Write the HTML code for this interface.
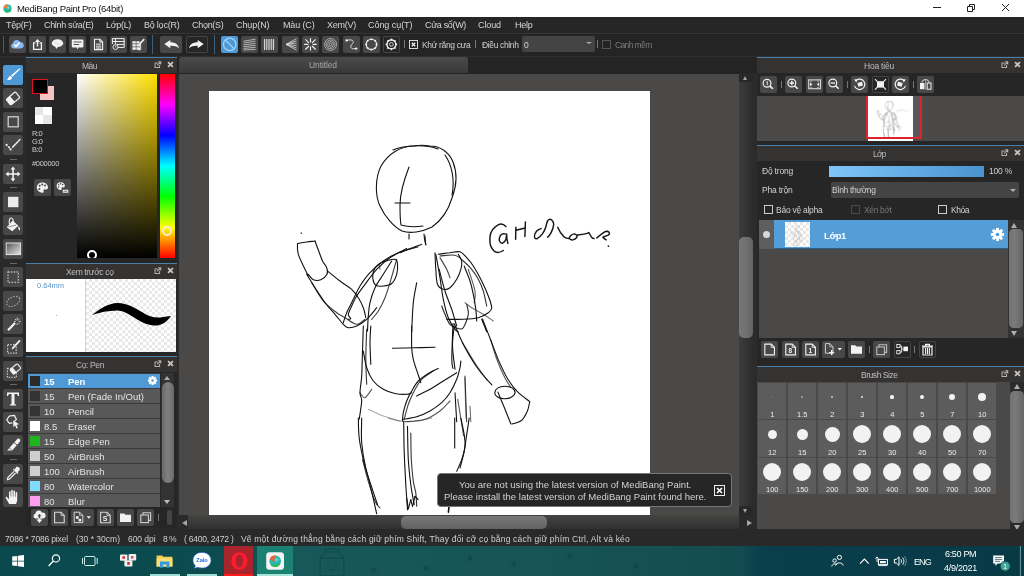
<!DOCTYPE html>
<html>
<head>
<meta charset="utf-8">
<title>MediBang Paint Pro</title>
<style>
html,body{margin:0;padding:0;}
body{width:1024px;height:576px;overflow:hidden;position:relative;background:#2b2b2b;font-family:"Liberation Sans",sans-serif;font-size:10px;color:#d2d2d2;}
.a{position:absolute;}
svg.a{will-change:transform;}
.t{position:absolute;white-space:nowrap;line-height:1;will-change:transform;}
/* title bar */
#title{left:0;top:0;width:1024px;height:17px;background:#fff;}
/* menu */
#menu{left:0;top:17px;width:1024px;height:16px;background:#262626;}
#menu .t{top:4px;font-size:9px;color:#d6d6d6;}
/* toolbar */
#tb{left:0;top:33px;width:1024px;height:24px;background:#242424;border-top:1px solid #343434;border-bottom:1px solid #2e2e2e;box-sizing:border-box;}
.btn{position:absolute;background:#484848;border-radius:2px;box-sizing:border-box;}
.btn.dk{background:#262626;box-shadow:inset 0 0 0 1px #444;}
.btn.sel{background:#4f9ad6;}
.sep{position:absolute;width:1px;background:#555;}
/* panels */
.hdr{position:absolute;height:16px;background:#353232;border-top:1px solid #4880ac;box-sizing:border-box;}
.hdr .t{top:4px;font-size:8.5px;color:#bdbdbd;}
</style>
</head>
<body>

<!-- TITLE BAR -->
<div id="title" class="a">
  <svg class="a" style="left:3px;top:3.8px" width="9" height="9" viewBox="0 0 9 9"><circle cx="4.5" cy="4.5" r="4.1" fill="#27b59f"/><path d="M1.2 6.9A4.1 4.1 0 0 0 8.2 6.4Q4.5 8 1.2 6.9Z" fill="#34b04a"/><path d="M.6 3.4A4.1 4.1 0 0 1 5 .4Q3.6 2.6 4.4 4.6Q2 4.6 .6 3.4Z" fill="#ef7d3a"/><circle cx="5.4" cy="3.6" r="1.5" fill="#5fd6c4"/></svg>
  <div class="t" style="left:17px;top:3.6px;font-size:9.5px;color:#111;letter-spacing:-0.310px">MediBang Paint Pro (64bit)</div>
  <svg class="a" style="left:920px;top:0" width="104" height="17" viewBox="0 0 104 17"><path d="M13 7.5H21" stroke="#222" stroke-width="1"/><path d="M47.5 6.5H52.5V11.5H47.5ZM49.5 6.5V4.5H54.5V9.5H52.5" fill="none" stroke="#222" stroke-width="1"/><path d="M82 4L89 11M89 4L82 11" stroke="#222" stroke-width="1"/></svg>
</div>

<!-- MENU -->
<div id="menu" class="a">
  <div class="t" style="left:6px;letter-spacing:-0.250px">Tệp(F)</div>
  <div class="t" style="left:44px;letter-spacing:-0.337px">Chỉnh sửa(E)</div>
  <div class="t" style="left:106px;letter-spacing:-0.320px">Lớp(L)</div>
  <div class="t" style="left:143.5px;letter-spacing:-0.224px">Bộ lọc(R)</div>
  <div class="t" style="left:191.5px;letter-spacing:-0.288px">Chọn(S)</div>
  <div class="t" style="left:235.5px;letter-spacing:-0.074px">Chụp(N)</div>
  <div class="t" style="left:282.5px;letter-spacing:-0.145px">Màu (C)</div>
  <div class="t" style="left:326.5px;letter-spacing:-0.253px">Xem(V)</div>
  <div class="t" style="left:367.5px;letter-spacing:-0.052px">Công cụ(T)</div>
  <div class="t" style="left:424.5px;letter-spacing:-0.337px">Cửa sổ(W)</div>
  <div class="t" style="left:478px;letter-spacing:-0.103px">Cloud</div>
  <div class="t" style="left:514.5px;letter-spacing:-0.254px">Help</div>
</div>

<!-- TOOLBAR -->
<div id="tb" class="a">
  <div class="sep" style="left:3px;top:2px;height:17px;background:#3a5f7f"></div>
  <div class="btn" style="left:9px;top:2px;width:17px;height:17px" ><svg class="a" style="left:0;top:0" width="17" height="17" viewBox="0 0 17 17"><path d="M4.6 12.6a2.7 2.7 0 0 1-.5-5.3a3.6 3.6 0 0 1 6.9-1.2a3.1 3.1 0 0 1 1.3 6.1q-.4.3-1 .4Z" fill="#86b7ef"/><path d="M5 8.6L6.9 10.6L10.6 6.4" fill="none" stroke="#fff" stroke-width="1.5"/></svg></div>
  <div class="btn" style="left:29px;top:2px;width:17px;height:17px" ><svg class="a" style="left:0;top:0" width="17" height="17" viewBox="0 0 17 17"><path d="M6.4 6.8H4.6V13.3H12.4V6.8H10.6" fill="none" stroke="#f2f2f2" stroke-width="1.3"/><path d="M8.5 10.4V4.6" stroke="#f2f2f2" stroke-width="1.5"/><path d="M5.9 6L8.5 3L11.1 6Z" fill="#f2f2f2"/></svg></div>
  <div class="btn" style="left:49px;top:2px;width:17px;height:17px" ><svg class="a" style="left:0;top:0" width="17" height="17" viewBox="0 0 17 17"><ellipse cx="8.5" cy="7.2" rx="5.7" ry="3.9" fill="#f2f2f2"/><path d="M6 9.8L7.2 13L9.4 10.3Z" fill="#f2f2f2"/><path d="M6 6.5h1.5M8 7.8h2" stroke="#bbb" stroke-width=".6"/></svg></div>
  <div class="btn" style="left:69px;top:2px;width:17px;height:17px" ><svg class="a" style="left:0;top:0" width="17" height="17" viewBox="0 0 17 17"><rect x="2.8" y="3.4" width="11.6" height="8" rx="1" fill="#f2f2f2"/><path d="M7.4 11.2L8.6 13.2L9.8 11.2Z" fill="#f2f2f2"/><path d="M4.6 6h8M4.6 8.5h5.5" stroke="#555" stroke-width="1.1"/></svg></div>
  <div class="btn" style="left:90px;top:2px;width:17px;height:17px" ><svg class="a" style="left:0;top:0" width="17" height="17" viewBox="0 0 17 17"><path d="M4.5 3.3H10L12.6 5.9V13.6H4.5Z" fill="none" stroke="#f2f2f2" stroke-width="1.1"/><path d="M9.8 3.3V6.1H12.6" fill="none" stroke="#f2f2f2" stroke-width="1"/><path d="M6 8.2h5.2M6 10.2h5.2M6 12h5.2" stroke="#f2f2f2" stroke-width="1"/></svg></div>
  <div class="btn" style="left:110px;top:2px;width:17px;height:17px" ><svg class="a" style="left:0;top:0" width="17" height="17" viewBox="0 0 17 17"><path d="M2.4 2.6H14.2V11.4H7.5M2.4 2.6V8M2.4 5.5H14.2M7 8.4H14.2M5.4 2.6V8" fill="none" stroke="#f2f2f2" stroke-width="1"/><circle cx="5.5" cy="11" r="2.5" fill="#444" stroke="#f2f2f2" stroke-width=".9"/><path d="M5.5 9.6V11H6.6" fill="none" stroke="#f2f2f2" stroke-width=".7"/></svg></div>
  <div class="btn" style="left:130px;top:2px;width:17px;height:17px" ><svg class="a" style="left:0;top:0" width="17" height="17" viewBox="0 0 17 17"><path d="M2.4 5.2h3.4v2.4H2.4zM6.4 5.2h3.2v2.4H6.4zM2.4 8.2h3.4v2.4H2.4zM6.4 8.2h3.6v2.4H6.4zM2.4 11.2h3.4v2.6H2.4zM6.4 11.2h3.6v2.6H6.4z" fill="#f2f2f2"/><path d="M10.6 6.2V13.8H8" stroke="#f2f2f2" stroke-width=".9" fill="none"/><path d="M13.6 2.6L14.8 3.8L10.2 8.6L8.8 9L9.2 7.6Z" fill="#f2f2f2"/></svg></div>
  <div class="sep" style="left:152px;top:1px;height:19px;background:#3a5f7f"></div>
  <div class="btn" style="left:160px;top:2px;width:22px;height:17px" ><svg class="a" style="left:0;top:0" width="22" height="17" viewBox="0 0 22 17"><path d="M4.4 8L10.3 3.9V6.3C15 6.3 18.2 8.4 19 12.2C16.6 10.2 13.6 9.6 10.3 9.8V12.2Z" fill="#f2f2f2"/></svg></div>
  <div class="btn dk" style="left:186px;top:2px;width:22px;height:17px" ><svg class="a" style="left:0;top:0" width="22" height="17" viewBox="0 0 22 17"><path d="M17.6 8L11.7 3.9V6.3C7 6.3 3.8 8.4 3 12.2C5.4 10.2 8.4 9.6 11.7 9.8V12.2Z" fill="#f2f2f2"/></svg></div>
  <div class="sep" style="left:214px;top:1px;height:19px;background:#3a5f7f"></div>
  <div class="btn sel" style="left:221px;top:2px;width:17px;height:17px" ><svg class="a" style="left:0;top:0" width="17" height="17" viewBox="0 0 17 17"><circle cx="8.7" cy="8.4" r="6.2" fill="none" stroke="#a6d6fb" stroke-width="1.2"/><path d="M4.4 4.2L13 12.6" stroke="#a6d6fb" stroke-width="1.2"/></svg></div>
  <div class="btn" style="left:241px;top:2px;width:17px;height:17px" ><svg class="a" style="left:0;top:0" width="17" height="17" viewBox="0 0 17 17"><path d="M2.5 5.2L14.6 3.2M2.5 7L14.6 5.2M2.5 8.8L14.6 7.4M2.5 10.6L14.6 9.4M2.5 12.4L14.6 11.4M2.5 14L14.6 13.4" stroke="#cfcfcf" stroke-width=".8"/></svg></div>
  <div class="btn" style="left:261px;top:2px;width:17px;height:17px" ><svg class="a" style="left:0;top:0" width="17" height="17" viewBox="0 0 17 17"><path d="M3.6 3V14M5.8 3V14M8 3V14M10.2 3V14M12.4 3V14" stroke="#eee" stroke-width="1"/><path d="M2.6 5H14M2.6 7.2H14M2.6 9.4H14M2.6 11.6H14" stroke="#aaa" stroke-width=".5"/></svg></div>
  <div class="btn" style="left:282px;top:2px;width:17px;height:17px" ><svg class="a" style="left:0;top:0" width="17" height="17" viewBox="0 0 17 17"><path d="M4 8.4L14.6 2.6M4 8.4L14.6 4.8M4 8.4L14.6 7M4 8.4L14.6 9.6M4 8.4L14.6 12M4 8.4L14.6 14.2" stroke="#ddd" stroke-width=".8"/></svg></div>
  <div class="btn" style="left:302px;top:2px;width:17px;height:17px" ><svg class="a" style="left:0;top:0" width="17" height="17" viewBox="0 0 17 17"><path d="M8.5 2.2V6.4M8.5 10.4V14.6M2.2 8.4H6.4M10.6 8.4H14.8M3.4 3.3L6.9 6.8M10.1 10L13.6 13.5M13.6 3.3L10.1 6.8M6.9 10L3.4 13.5" stroke="#f2f2f2" stroke-width="1.15"/></svg></div>
  <div class="btn" style="left:322px;top:2px;width:17px;height:17px" ><svg class="a" style="left:0;top:0" width="17" height="17" viewBox="0 0 17 17"><g fill="none" stroke="#cfcfcf" stroke-width=".7"><circle cx="8.6" cy="8.4" r="6"/><circle cx="8.6" cy="8.4" r="4.4"/><circle cx="8.6" cy="8.4" r="2.9"/><circle cx="8.6" cy="8.4" r="1.3"/></g></svg></div>
  <div class="btn" style="left:343px;top:2px;width:17px;height:17px" ><svg class="a" style="left:0;top:0" width="17" height="17" viewBox="0 0 17 17"><path d="M3.6 4.4C9 2.8 12 5 9.4 7.8C6.6 10.6 7 13.6 13.2 12.6" fill="none" stroke="#ddd" stroke-width="1"/><circle cx="3.6" cy="4.4" r="1.2" fill="#f2f2f2"/><circle cx="13.2" cy="12.6" r="1.2" fill="#f2f2f2"/></svg></div>
  <div class="btn" style="left:363px;top:2px;width:17px;height:17px" ><svg class="a" style="left:0;top:0" width="17" height="17" viewBox="0 0 17 17"><circle cx="8.4" cy="8.4" r="5.2" fill="none" stroke="#f2f2f2" stroke-width="1.1"/><g fill="#f2f2f2"><circle cx="8.4" cy="3.2" r="1"/><circle cx="8.4" cy="13.6" r="1"/><circle cx="3.2" cy="8.4" r="1"/><circle cx="13.6" cy="8.4" r="1"/><circle cx="4.7" cy="4.7" r=".9"/><circle cx="12.1" cy="4.7" r=".9"/><circle cx="4.7" cy="12.1" r=".9"/><circle cx="12.1" cy="12.1" r=".9"/></g></svg></div>
  <div class="btn dk" style="left:383px;top:2px;width:17px;height:17px" ><svg class="a" style="left:0;top:0" width="17" height="17" viewBox="0 0 17 17"><g transform="translate(8.4 8.4)"><circle r="4.4" fill="none" stroke="#e8e8e8" stroke-width="1.41"/><circle r="1.85" fill="none" stroke="#e8e8e8" stroke-width="0.88"/><rect x="-0.88" y="-5.81" width="1.76" height="1.85" fill="#e8e8e8" transform="rotate(0)"/><rect x="-0.88" y="-5.81" width="1.76" height="1.85" fill="#e8e8e8" transform="rotate(45)"/><rect x="-0.88" y="-5.81" width="1.76" height="1.85" fill="#e8e8e8" transform="rotate(90)"/><rect x="-0.88" y="-5.81" width="1.76" height="1.85" fill="#e8e8e8" transform="rotate(135)"/><rect x="-0.88" y="-5.81" width="1.76" height="1.85" fill="#e8e8e8" transform="rotate(180)"/><rect x="-0.88" y="-5.81" width="1.76" height="1.85" fill="#e8e8e8" transform="rotate(225)"/><rect x="-0.88" y="-5.81" width="1.76" height="1.85" fill="#e8e8e8" transform="rotate(270)"/><rect x="-0.88" y="-5.81" width="1.76" height="1.85" fill="#e8e8e8" transform="rotate(315)"/></g></svg></div>
  <div class="sep" style="left:404px;top:6px;height:8px;background:#777"></div>
  <div class="a" style="left:409px;top:6px;width:9px;height:9px;border:1px solid #d8d8d8;box-sizing:border-box;"></div><svg class="a" style="left:409px;top:6px" width="9" height="9" viewBox="0 0 9 9"><path d="M2.8 2.8L6.2 6.2M6.2 2.8L2.8 6.2" stroke="#eee" stroke-width="1.3"/></svg>
  <div class="t" style="left:421.8px;top:6.7px;font-size:8.5px;color:#d0d0d0;letter-spacing:-0.350px" id="tAA">Khử răng cưa</div>
  <div class="sep" style="left:475px;top:6px;height:8px;background:#777"></div>
  <div class="t" style="left:481.8px;top:6.7px;font-size:8.5px;color:#d0d0d0;letter-spacing:-0.367px" id="tDC">Điều chỉnh</div>
  <div class="a" style="left:522px;top:2px;width:73px;height:16px;background:#444;border-radius:2px"></div>
  <div class="t" style="left:524.4px;top:6.7px;font-size:8.5px;color:#d0d0d0">0</div>
  <div class="a" style="left:586px;top:8px;width:0;height:0;border-left:3px solid transparent;border-right:3px solid transparent;border-top:2px solid #aaa"></div>
  <div class="sep" style="left:597px;top:6px;height:8px;background:#777"></div>
  <div class="a" style="left:602px;top:6px;width:9px;height:9px;border:1px solid #555;box-sizing:border-box;"></div>
  <div class="t" style="left:615.3px;top:6.7px;font-size:8.5px;color:#7c7c7c;letter-spacing:-0.622px" id="tCM">Canh mềm</div>
</div>

<!-- LEFT TOOLBOX -->
<div id="toolbox" class="a" style="left:0;top:57px;width:26px;height:471px;background:#292929;">
  <div class="btn sel" style="left:3px;top:8px;width:20px;height:20px" ><svg class="a" style="left:0;top:0" width="20" height="20" viewBox="0 0 20 20"><path d="M16.6 3.2L17.4 4L9.4 11.8L8 10.6Z" fill="#fff"/><path d="M7.6 11L9 12.4C8.6 14.8 6 15.6 3.6 14.6C5.4 14.2 5 11.6 7.6 11Z" fill="#fff"/></svg></div>
  <div class="btn" style="left:3px;top:31px;width:20px;height:20px" ><svg class="a" style="left:0;top:0" width="20" height="20" viewBox="0 0 20 20"><g transform="rotate(-40 10 10.4)"><rect x="4" y="6.8" width="12" height="7.4" rx="1.2" fill="none" stroke="#f2f2f2" stroke-width="1.2"/><path d="M4 8A1.2 1.2 0 0 1 5.2 6.8H9.2V14.2H5.2A1.2 1.2 0 0 1 4 13Z" fill="#f2f2f2"/></g></svg></div>
  <div class="btn" style="left:3px;top:55px;width:20px;height:20px" ><svg class="a" style="left:0;top:0" width="20" height="20" viewBox="0 0 20 20"><rect x="5.2" y="4.8" width="10" height="10" fill="none" stroke="#cfcfcf" stroke-width="1.3"/></svg></div>
  <div class="btn" style="left:3px;top:78px;width:20px;height:20px" ><svg class="a" style="left:0;top:0" width="20" height="20" viewBox="0 0 20 20"><path d="M17 3.6L17.8 4.6L10.4 12.6L8.8 13.2L9.2 11.6Z" fill="#f2f2f2"/><circle cx="3.6" cy="9.8" r="1.1" fill="#f2f2f2"/><circle cx="6" cy="12.2" r="1" fill="#f2f2f2"/><circle cx="7.6" cy="14.4" r="1.1" fill="#f2f2f2"/><path d="M3.6 9.8L7.6 14.4" stroke="#ddd" stroke-width=".6"/></svg></div>
  <div class="btn" style="left:3px;top:107px;width:20px;height:20px" ><svg class="a" style="left:0;top:0" width="20" height="20" viewBox="0 0 20 20"><path d="M10 2.6L12.4 5.6H10.8V9.2H14.4V7.6L17.4 10L14.4 12.4V10.8H10.8V14.4H12.4L10 17.4L7.6 14.4H9.2V10.8H5.6V12.4L2.6 10L5.6 7.6V9.2H9.2V5.6H7.6Z" fill="#f2f2f2"/></svg></div>
  <div class="btn" style="left:3px;top:135px;width:20px;height:20px" ><svg class="a" style="left:0;top:0" width="20" height="20" viewBox="0 0 20 20"><rect x="5" y="4.8" width="10.4" height="10.4" fill="#ececec"/></svg></div>
  <div class="btn" style="left:3px;top:158px;width:20px;height:20px" ><svg class="a" style="left:0;top:0" width="20" height="20" viewBox="0 0 20 20"><path d="M9.6 5.4L15.4 10.8L9.2 16.2L3.8 12.2Z" fill="#f2f2f2"/><path d="M6.6 9.6C5.6 6 6.6 3 8.2 3C9.8 3 10.6 5.6 10.4 8" fill="none" stroke="#f2f2f2" stroke-width="1.1"/><path d="M15.4 11C17 12.4 17.4 14.4 16.8 15.6C15.4 15.2 15 13.2 15.4 11Z" fill="#f2f2f2"/><path d="M5.4 11.8L13.2 10.2" stroke="#666" stroke-width=".7"/></svg></div>
  <div class="btn" style="left:3px;top:182px;width:20px;height:20px" ><svg class="a" style="left:0;top:0" width="20" height="20" viewBox="0 0 20 20"><defs><linearGradient id="gt7" x1="0" y1="0" x2="1" y2="1"><stop offset="0" stop-color="#555"/><stop offset="1" stop-color="#e8e8e8"/></linearGradient></defs><rect x="4.6" y="4" width="15.2" height="11.6" fill="url(#gt7)" stroke="#e6e6e6" stroke-width="1" transform="translate(-1.2 0) scale(.95 1)"/></svg></div>
  <div class="btn" style="left:3px;top:210px;width:20px;height:20px" ><svg class="a" style="left:0;top:0" width="20" height="20" viewBox="0 0 20 20"><rect x="5" y="5" width="10.4" height="10.4" fill="none" stroke="#bcbcbc" stroke-width="1.3" stroke-dasharray="1.5 1.4"/></svg></div>
  <div class="btn" style="left:3px;top:234px;width:20px;height:20px" ><svg class="a" style="left:0;top:0" width="20" height="20" viewBox="0 0 20 20"><ellipse cx="10.2" cy="10.4" rx="7" ry="4.4" transform="rotate(-28 10.2 10.4)" fill="none" stroke="#a4a4a4" stroke-width="1.2" stroke-dasharray="1.5 1.4"/></svg></div>
  <div class="btn" style="left:3px;top:257px;width:20px;height:20px" ><svg class="a" style="left:0;top:0" width="20" height="20" viewBox="0 0 20 20"><path d="M4.2 15.4L5.8 17L12.8 9.8L11.2 8.2Z" fill="#f2f2f2"/><path d="M14.2 3.6V6.4M14.2 9.4V11M11 7.4H12.8M15.8 7.4H17.6M12 5L13.2 6.2M16.4 5L15.2 6.2M16.4 9.8L15.4 8.8" stroke="#e0e0e0" stroke-width=".9"/></svg></div>
  <div class="btn" style="left:3px;top:280px;width:20px;height:20px" ><svg class="a" style="left:0;top:0" width="20" height="20" viewBox="0 0 20 20"><rect x="4.6" y="7.6" width="8.6" height="8.6" fill="none" stroke="#d0d0d0" stroke-width="1.2" stroke-dasharray="1.4 1.3"/><path d="M16.4 2.8L17.6 4L10.4 11.8L8.6 12.4L9.2 10.6Z" fill="#f2f2f2"/></svg></div>
  <div class="btn" style="left:3px;top:304px;width:20px;height:20px" ><svg class="a" style="left:0;top:0" width="20" height="20" viewBox="0 0 20 20"><rect x="4.4" y="7.4" width="9" height="9" fill="none" stroke="#c4c4c4" stroke-width="1.2" stroke-dasharray="1.4 1.3"/><g transform="rotate(-40 12.4 8)"><rect x="7.6" y="5" width="9.6" height="6" rx="1" fill="#484848" stroke="#f2f2f2" stroke-width="1.1"/><rect x="7.6" y="5" width="3.6" height="6" fill="#f2f2f2"/></g></svg></div>
  <div class="btn" style="left:3px;top:332px;width:20px;height:20px" ><svg class="a" style="left:0;top:0" width="20" height="20" viewBox="0 0 20 20"><path d="M4 3.6H16V7H14.9C14.7 5.6 14.2 5 12.8 5H11.5V14.2C11.5 15.2 11.9 15.5 13.2 15.5V16.6H6.8V15.5C8.1 15.5 8.5 15.2 8.5 14.2V5H7.2C5.8 5 5.3 5.6 5.1 7H4Z" fill="#f2f2f2"/></svg></div>
  <div class="btn" style="left:3px;top:355px;width:20px;height:20px" ><svg class="a" style="left:0;top:0" width="20" height="20" viewBox="0 0 20 20"><path d="M6 4.2L11.4 3.4L13.4 7.4L11 9.6" fill="none" stroke="#f2f2f2" stroke-width="1.2"/><path d="M6 4.2L3.8 8L6.4 11.4L9.4 10.8" fill="none" stroke="#f2f2f2" stroke-width="1.2"/><path d="M10.2 8.6L16.2 12.2L13.6 12.8L14.8 16L13.4 16.6L12.2 13.6L10.4 15.2Z" fill="#f2f2f2"/></svg></div>
  <div class="btn" style="left:3px;top:378px;width:20px;height:20px" ><svg class="a" style="left:0;top:0" width="20" height="20" viewBox="0 0 20 20"><path d="M4.2 15.6H9.2L17 6.4C17.8 5.2 17 3.6 15.4 3.6C14.8 3.6 14.2 3.9 13.8 4.4Z" fill="#f2f2f2"/><path d="M11 7.6L14.2 10" stroke="#484848" stroke-width=".9"/><path d="M6.4 13.2L8.6 14.8" stroke="#484848" stroke-width=".7"/></svg></div>
  <div class="btn" style="left:3px;top:407px;width:20px;height:20px" ><svg class="a" style="left:0;top:0" width="20" height="20" viewBox="0 0 20 20"><path d="M13 3.2C14.6 2.2 16.8 3.4 16.8 5.2C16.8 6 16.4 6.6 15.8 7L14.6 8.2L15.4 9L14.4 10L10 5.6L11 4.6L11.8 5.4Z" fill="#f2f2f2"/><path d="M11 7.4L5 13.4L4.4 15.6L6.6 15L12.6 9" fill="none" stroke="#f2f2f2" stroke-width="1.2"/></svg></div>
  <div class="btn" style="left:3px;top:430px;width:20px;height:20px" ><svg class="a" style="left:0;top:0" width="20" height="20" viewBox="0 0 20 20"><path d="M6.2 17C4.8 14.6 3.4 12.6 2.6 10.6C2.4 9.8 3.4 9.4 4 10L6 12.4V5C6 4 7.6 4 7.6 5V9.6H8.2V3.6C8.2 2.6 9.8 2.6 9.8 3.6V9.4H10.4V4.2C10.4 3.2 12 3.2 12 4.2V9.8H12.6V5.8C12.6 4.8 14.2 4.8 14.2 5.8V12.6C14.2 14.4 13.6 15.8 13 17Z" fill="#f2f2f2"/></svg></div>
  <div class="a" style="left:10px;top:102px;width:7px;height:1px;background:#666"></div>
  <div class="a" style="left:10px;top:130px;width:7px;height:1px;background:#666"></div>
  <div class="a" style="left:10px;top:206px;width:7px;height:1px;background:#666"></div>
  <div class="a" style="left:10px;top:327px;width:7px;height:1px;background:#666"></div>
  <div class="a" style="left:10px;top:402px;width:7px;height:1px;background:#666"></div>
</div>

<!-- COLOR PANEL -->
<div id="colorp" class="a" style="left:26px;top:57px;width:150.5px;height:206px;background:#262626;">
  <div class="hdr" style="left:0;top:0;width:151px;"><svg class="a" style="left:128.2px;top:2.6px" width="7.6" height="7.6" viewBox="0 0 9 9"><path d="M4.6 2.4H1.2V7.8H6.6V4.6" fill="none" stroke="#b4b0aa" stroke-width="1.2"/><path d="M3.8 5.2L7.6 1.4M5 1H8V4" fill="none" stroke="#b4b0aa" stroke-width="1.2"/></svg><svg class="a" style="left:140.6px;top:3.2px" width="7" height="7" viewBox="0 0 8 8"><path d="M1.2 1.2L6.8 6.8M6.8 1.2L1.2 6.8" stroke="#c8c4bc" stroke-width="2.1"/></svg><div class="t" style="left:56px;letter-spacing:-0.516px">Màu</div></div>
  <div class="a" style="left:14px;top:29px;width:14px;height:14px;background:#f2c4c4;"></div>
  <div class="a" style="left:6px;top:22px;width:16px;height:15px;background:#000;border:1px solid #e0131a;box-sizing:border-box;"></div>
  <div class="a" id="trsw" style="left:8.5px;top:49.5px;width:17.6px;height:17.6px;background:#fff;"><div class="a" style="left:0;top:0;width:8.8px;height:8.8px;background:#e6e6e6"></div><div class="a" style="left:8.8px;top:8.8px;width:8.8px;height:8.8px;background:#e6e6e6"></div></div>
  <div class="t" style="left:6px;top:73px;font-size:7.5px;color:#ccc;letter-spacing:-0.557px">R:0</div>
  <div class="t" style="left:6px;top:81px;font-size:7.5px;color:#ccc;letter-spacing:-0.531px">G:0</div>
  <div class="t" style="left:6px;top:89px;font-size:7.5px;color:#ccc;letter-spacing:-0.422px">B:0</div>
  <div class="t" style="left:6px;top:103px;font-size:7.5px;color:#ccc;letter-spacing:-0.315px">#000000</div>
  <div class="btn" style="left:8px;top:122px;width:17px;height:17px" ><svg class="a" style="left:0;top:0" width="17" height="17" viewBox="0 0 17 17"><path d="M8.4 3.3999999999999995C11.8 3.3999999999999995 14.0 5.6 14.0 8.6C14.0 10.2 12.600000000000001 10.8 11.4 10.4C10.0 10.0 9.200000000000001 11.0 9.6 12.2C10.0 13.399999999999999 9.0 14.0 7.800000000000001 13.8C4.800000000000001 13.399999999999999 2.8000000000000007 11.2 2.8000000000000007 8.6C2.8000000000000007 5.6 5.0 3.3999999999999995 8.4 3.3999999999999995Z" fill="#f2f2f2"/><circle cx="5.6000000000000005" cy="6.8" r="1" fill="#444"/><circle cx="8.200000000000001" cy="5.3999999999999995" r="1" fill="#444"/><circle cx="11.0" cy="6.6" r="1" fill="#444"/><circle cx="5.4" cy="10.0" r="1" fill="#444"/></svg></div>
  <div class="btn" style="left:28px;top:122px;width:17px;height:17px" ><svg class="a" style="left:0;top:0" width="17" height="17" viewBox="0 0 17 17"><g transform="translate(.5 .7) scale(.74)"><path d="M8.4 3.3999999999999995C11.8 3.3999999999999995 14.0 5.6 14.0 8.6C14.0 10.2 12.600000000000001 10.8 11.4 10.4C10.0 10.0 9.200000000000001 11.0 9.6 12.2C10.0 13.399999999999999 9.0 14.0 7.800000000000001 13.8C4.800000000000001 13.399999999999999 2.8000000000000007 11.2 2.8000000000000007 8.6C2.8000000000000007 5.6 5.0 3.3999999999999995 8.4 3.3999999999999995Z" fill="#f2f2f2"/><circle cx="5.6000000000000005" cy="6.8" r="1" fill="#444"/><circle cx="8.200000000000001" cy="5.3999999999999995" r="1" fill="#444"/><circle cx="11.0" cy="6.6" r="1" fill="#444"/><circle cx="5.4" cy="10.0" r="1" fill="#444"/></g><rect x="8.6" y="10.6" width="6" height="3.4" rx=".6" fill="#f2f2f2" stroke="#444" stroke-width=".5"/><path d="M9.8 12.3h3.6" stroke="#666" stroke-width=".8"/></svg></div>
  <div class="a" style="left:51px;top:17px;width:80px;height:184px;background:linear-gradient(to bottom,rgba(0,0,0,0),#000),linear-gradient(to right,#fff,#ffdf00);"></div>
  <div class="a" style="left:134px;top:17px;width:15px;height:184px;background:linear-gradient(to bottom,#ff0000 0%,#ff00ff 16.7%,#0000ff 33.3%,#00ffff 50%,#00ff00 66.7%,#ffff00 83.3%,#ff0000 100%);"></div>
  <div class="a" style="left:136px;top:169px;width:10px;height:10px;border-radius:50%;border:2px solid #f3eed8;box-sizing:border-box;"></div>
  <div class="a" style="left:61px;top:192px;width:10px;height:9px;overflow:hidden"><div class="a" style="left:0;top:1px;width:10px;height:10px;border-radius:50%;border:2.2px solid #fff;box-sizing:border-box;"></div></div>
</div>

<!-- BRUSH PREVIEW PANEL -->
<div id="prevp" class="a" style="left:26px;top:263px;width:150.5px;height:93px;background:#262626;">
  <div class="hdr" style="left:0;top:0;width:151px;"><svg class="a" style="left:128.2px;top:2.6px" width="7.6" height="7.6" viewBox="0 0 9 9"><path d="M4.6 2.4H1.2V7.8H6.6V4.6" fill="none" stroke="#b4b0aa" stroke-width="1.2"/><path d="M3.8 5.2L7.6 1.4M5 1H8V4" fill="none" stroke="#b4b0aa" stroke-width="1.2"/></svg><svg class="a" style="left:140.6px;top:3.2px" width="7" height="7" viewBox="0 0 8 8"><path d="M1.2 1.2L6.8 6.8M6.8 1.2L1.2 6.8" stroke="#c8c4bc" stroke-width="2.1"/></svg><div class="t" style="left:40px;letter-spacing:-0.366px">Xem trước cọ</div></div>
  <div class="a" style="left:.3px;top:15.8px;width:59px;height:73.2px;background:#fff;"></div>
  <div class="a" style="left:59.2px;top:15.8px;width:.8px;height:73.2px;background:#d0d0d0;"></div>
  <div class="a" style="left:60px;top:15.8px;width:90.3px;height:73.2px;background-color:#fff;background-image:linear-gradient(45deg,#e9e9e9 25%,transparent 25%,transparent 75%,#e9e9e9 75%),linear-gradient(45deg,#e9e9e9 25%,transparent 25%,transparent 75%,#e9e9e9 75%);background-size:6px 6px;background-position:0 0,3px 3px;"></div>
  <div class="t" style="left:11px;top:19px;font-size:7.5px;color:#5b94c8">0.64mm</div>
  <div class="a" style="left:30px;top:52px;width:1px;height:1px;background:#aab"></div>
  <svg class="a" style="left:60px;top:17px" width="90" height="72" viewBox="0 0 90 72"><path d="M6 35C14 28.5 22 23.3 31.5 22.9C42 22.9 50 28.5 56 32C62 36 68 38 74 37.5C79 37 83 36 85 36C82 41 76 45.6 69 45.6C60 45.2 53 41 47 36.8C42 33.4 37 30.6 31 30.4C22 30.5 14 32.4 6 35Z" fill="#000"/></svg>
</div>

<!-- BRUSH LIST PANEL -->
<div id="brushp" class="a" style="left:26px;top:356px;width:150.5px;height:172px;background:#262626;">
  <div class="hdr" style="left:0;top:0;width:151px;"><svg class="a" style="left:128.2px;top:2.6px" width="7.6" height="7.6" viewBox="0 0 9 9"><path d="M4.6 2.4H1.2V7.8H6.6V4.6" fill="none" stroke="#b4b0aa" stroke-width="1.2"/><path d="M3.8 5.2L7.6 1.4M5 1H8V4" fill="none" stroke="#b4b0aa" stroke-width="1.2"/></svg><svg class="a" style="left:140.6px;top:3.2px" width="7" height="7" viewBox="0 0 8 8"><path d="M1.2 1.2L6.8 6.8M6.8 1.2L1.2 6.8" stroke="#c8c4bc" stroke-width="2.1"/></svg><div class="t" style="left:49.8px;letter-spacing:-0.388px">Cọ: Pen</div></div>
  <div class="a" style="left:2px;top:17px;width:132px;height:134px;overflow:hidden;background:#3a3a3a">
    <div class="a" style="left:0;top:1px;width:132px;height:14px;background:#4f9ad6"><div class="a" style="left:2px;top:2px;width:10px;height:10px;background:#2b2b2b"></div><div class="t" style="left:16px;top:2.5px;font-size:9.5px;font-weight:bold;color:#fff">15</div><div class="t" style="left:40px;top:2.5px;font-size:9.5px;font-weight:bold;color:#fff">Pen</div><div class="a" style="left:117px;top:-1px;width:15px;height:15px" ><svg class="a" style="left:0;top:0" width="15" height="15" viewBox="0 0 15 15"><g transform="translate(7.5 7.5)"><circle r="3.31" fill="#fff"/><rect x="-1.01" y="-4.60" width="2.02" height="2.30" fill="#fff" transform="rotate(0)"/><rect x="-1.01" y="-4.60" width="2.02" height="2.30" fill="#fff" transform="rotate(45)"/><rect x="-1.01" y="-4.60" width="2.02" height="2.30" fill="#fff" transform="rotate(90)"/><rect x="-1.01" y="-4.60" width="2.02" height="2.30" fill="#fff" transform="rotate(135)"/><rect x="-1.01" y="-4.60" width="2.02" height="2.30" fill="#fff" transform="rotate(180)"/><rect x="-1.01" y="-4.60" width="2.02" height="2.30" fill="#fff" transform="rotate(225)"/><rect x="-1.01" y="-4.60" width="2.02" height="2.30" fill="#fff" transform="rotate(270)"/><rect x="-1.01" y="-4.60" width="2.02" height="2.30" fill="#fff" transform="rotate(315)"/><circle r="1.24" fill="#4f9ad6"/></g></svg></div></div>
    <div class="a" style="left:0;top:16px;width:132px;height:14px;background:#585858"><div class="a" style="left:2px;top:2px;width:10px;height:10px;background:#333"></div><div class="t" style="left:16px;top:2.5px;font-size:9.5px;font-weight:normal;color:#e4e4e4">15</div><div class="t" style="left:40px;top:2.5px;font-size:9.5px;font-weight:normal;color:#e4e4e4">Pen (Fade In/Out)</div></div>
    <div class="a" style="left:0;top:31px;width:132px;height:14px;background:#585858"><div class="a" style="left:2px;top:2px;width:10px;height:10px;background:#333"></div><div class="t" style="left:16px;top:2.5px;font-size:9.5px;font-weight:normal;color:#e4e4e4">10</div><div class="t" style="left:40px;top:2.5px;font-size:9.5px;font-weight:normal;color:#e4e4e4">Pencil</div></div>
    <div class="a" style="left:0;top:46px;width:132px;height:14px;background:#585858"><div class="a" style="left:2px;top:2px;width:10px;height:10px;background:#fff"></div><div class="t" style="left:16px;top:2.5px;font-size:9.5px;font-weight:normal;color:#e4e4e4">8.5</div><div class="t" style="left:40px;top:2.5px;font-size:9.5px;font-weight:normal;color:#e4e4e4">Eraser</div></div>
    <div class="a" style="left:0;top:61px;width:132px;height:14px;background:#585858"><div class="a" style="left:2px;top:2px;width:10px;height:10px;background:#1fb51f"></div><div class="t" style="left:16px;top:2.5px;font-size:9.5px;font-weight:normal;color:#e4e4e4">15</div><div class="t" style="left:40px;top:2.5px;font-size:9.5px;font-weight:normal;color:#e4e4e4">Edge Pen</div></div>
    <div class="a" style="left:0;top:76px;width:132px;height:14px;background:#585858"><div class="a" style="left:2px;top:2px;width:10px;height:10px;background:#cfcfcf"></div><div class="t" style="left:16px;top:2.5px;font-size:9.5px;font-weight:normal;color:#e4e4e4">50</div><div class="t" style="left:40px;top:2.5px;font-size:9.5px;font-weight:normal;color:#e4e4e4">AirBrush</div></div>
    <div class="a" style="left:0;top:91px;width:132px;height:14px;background:#585858"><div class="a" style="left:2px;top:2px;width:10px;height:10px;background:#cfcfcf"></div><div class="t" style="left:16px;top:2.5px;font-size:9.5px;font-weight:normal;color:#e4e4e4">100</div><div class="t" style="left:40px;top:2.5px;font-size:9.5px;font-weight:normal;color:#e4e4e4">AirBrush</div></div>
    <div class="a" style="left:0;top:106px;width:132px;height:14px;background:#585858"><div class="a" style="left:2px;top:2px;width:10px;height:10px;background:#7fdcff"></div><div class="t" style="left:16px;top:2.5px;font-size:9.5px;font-weight:normal;color:#e4e4e4">80</div><div class="t" style="left:40px;top:2.5px;font-size:9.5px;font-weight:normal;color:#e4e4e4">Watercolor</div></div>
    <div class="a" style="left:0;top:121px;width:132px;height:14px;background:#585858"><div class="a" style="left:2px;top:2px;width:10px;height:10px;background:#ff9df0"></div><div class="t" style="left:16px;top:2.5px;font-size:9.5px;font-weight:normal;color:#e4e4e4">80</div><div class="t" style="left:40px;top:2.5px;font-size:9.5px;font-weight:normal;color:#e4e4e4">Blur</div></div>
  </div>
  <div class="a" style="left:135px;top:17px;width:13px;height:134px;background:#333;"></div>
  <div class="a" style="left:135.5px;top:26px;width:12px;height:101px;border-radius:6px;background:linear-gradient(to right,#6a6a6a,#808080,#6a6a6a);"></div>
  <div class="a" style="left:138px;top:20px;width:0;height:0;border-left:3px solid transparent;border-right:3px solid transparent;border-bottom:4px solid #aaa"></div>
  <div class="a" style="left:138px;top:144px;width:0;height:0;border-left:3px solid transparent;border-right:3px solid transparent;border-top:4px solid #bbb"></div>
  <div class="btn" style="left:5.3px;top:153.4px;width:17px;height:17px" ><svg class="a" style="left:0;top:0" width="17" height="17" viewBox="0 0 17 17"><path d="M4.6 9.6a2.5 2.5 0 0 1-.3-4.9a3.5 3.5 0 0 1 6.7-1a2.9 2.9 0 0 1 1.4 5.7Z" fill="#f2f2f2"/><path d="M8.4 7V12" stroke="#f2f2f2" stroke-width="2"/><path d="M5.4 10.6H11.4L8.4 14Z" fill="#f2f2f2"/><path d="M8.4 5.6V9.2" stroke="#444" stroke-width="1.4"/><path d="M6.4 7.2L8.4 5L10.4 7.2Z" fill="#444"/></svg></div>
  <div class="btn" style="left:25.3px;top:153.4px;width:17px;height:17px" ><svg class="a" style="left:0;top:0" width="17" height="17" viewBox="0 0 17 17"><path d="M3.6 3.2H10.0L13.2 6.4V13.8H3.6Z" fill="none" stroke="#d8d8d8" stroke-width="1.1"/><path d="M10.0 3.2V6.4H13.2" fill="none" stroke="#d8d8d8" stroke-width="0.88"/></svg></div>
  <div class="btn" style="left:45px;top:153px;width:23px;height:17px" ><svg class="a" style="left:0;top:0" width="23" height="17" viewBox="0 0 23 17"><path d="M3.2 3.2H8.600000000000001L11.8 6.4V13.600000000000001H3.2Z" fill="none" stroke="#d8d8d8" stroke-width="1"/><path d="M8.600000000000001 3.2V6.4H11.8" fill="none" stroke="#d8d8d8" stroke-width="0.80"/><rect x="5" y="7.2" width="2.6" height="2.6" fill="#f2f2f2"/><rect x="7.6" y="9.8" width="2.6" height="2.6" fill="#f2f2f2"/><path d="M15.6 7.2L20 7.2L17.8 9.8Z" fill="#f2f2f2"/></svg></div>
  <div class="btn" style="left:71px;top:153px;width:17px;height:17px" ><svg class="a" style="left:0;top:0" width="17" height="17" viewBox="0 0 17 17"><path d="M3.6 3.2H10.0L13.2 6.4V13.8H3.6Z" fill="none" stroke="#d8d8d8" stroke-width="1.1"/><path d="M10.0 3.2V6.4H13.2" fill="none" stroke="#d8d8d8" stroke-width="0.88"/><text x="8.2" y="12.2" font-family="Liberation Sans" font-size="7" font-weight="bold" fill="#f2f2f2" text-anchor="middle">S</text></svg></div>
  <div class="btn" style="left:91px;top:153px;width:17px;height:17px" ><svg class="a" style="left:0;top:0" width="17" height="17" viewBox="0 0 17 17"><path d="M3 4.4H7.2L8.4 5.800000000000001H14V13.0H3Z" fill="#f2f2f2"/></svg></div>
  <div class="btn" style="left:111px;top:153px;width:17px;height:17px" ><svg class="a" style="left:0;top:0" width="17" height="17" viewBox="0 0 17 17"><rect x="3.8" y="6" width="7.6" height="7.6" fill="none" stroke="#d0d0d0" stroke-width="1.1"/><path d="M6 6V3.8H13.6V11.4H11.4" fill="none" stroke="#d0d0d0" stroke-width="1.1"/></svg></div>
  <div class="sep" style="left:132px;top:158px;height:7px;background:#777"></div>
  <div class="a" style="left:141px;top:154px;width:5px;height:15px;border-radius:2px;background:#444"></div>
</div>

<!-- DOCUMENT AREA -->
<div id="tabbar" class="a" style="left:176.5px;top:57px;width:580px;height:17px;background:#242424;">
  <div class="a" style="left:2.7px;top:0;width:289px;height:16px;background:linear-gradient(to bottom,#4b4b4b,#393939);border-radius:3px 3px 0 0;"></div>
  <div class="t" style="left:132px;top:4px;font-size:8.5px;color:#a8a8a8;letter-spacing:-0.104px">Untitled</div>
</div>
<div id="docarea" class="a" style="left:179px;top:73.5px;width:560px;height:442px;background:#4a4948;overflow:hidden;">
  <div id="paper" class="a" style="left:30.2px;top:17.3px;width:440.8px;height:425px;background:#fff;"></div>
</div>
<div id="vscroll" class="a" style="left:738.6px;top:73px;width:14.3px;height:442px;background:linear-gradient(to right,#3d3c3b,#2c2c2c);">
  <div class="a" style="left:0;top:0;width:14.3px;height:8.5px;background:#282828"></div>
  <div class="a" style="left:4.4px;top:2.6px;width:0;height:0;border-left:2.8px solid transparent;border-right:2.8px solid transparent;border-bottom:4.8px solid #a2a2a2"></div>
  <div class="a" style="left:.3px;top:164px;width:14.6px;height:101px;border-radius:5px;background:linear-gradient(to right,#777,#707070 50%,#626262);"></div>
  <div class="a" style="left:0;top:433px;width:14.3px;height:9px;background:#282828"></div>
  <div class="a" style="left:4.4px;top:435.6px;width:0;height:0;border-left:2.8px solid transparent;border-right:2.8px solid transparent;border-top:4.8px solid #a2a2a2"></div>
</div>
<div id="hscroll" class="a" style="left:179px;top:515.4px;width:573.5px;height:14.2px;background:linear-gradient(to bottom,#454443,#2f2f2f);">
  <div class="a" style="left:0;top:0;width:9px;height:14.2px;background:#2a2a2a"></div>
  <div class="a" style="left:2.6px;top:4.2px;width:0;height:0;border-top:3px solid transparent;border-bottom:3px solid transparent;border-right:5px solid #a6a6a6"></div>
  <div class="a" style="left:222px;top:1px;width:146px;height:13px;border-radius:5px;background:linear-gradient(to bottom,#777,#6e6e6e 50%,#626262);"></div>
  <div class="a" style="left:559.5px;top:0;width:14px;height:14.2px;background:#2a2a2a"></div>
  <div class="a" style="left:567.6px;top:4.2px;width:0;height:0;border-top:3px solid transparent;border-bottom:3px solid transparent;border-left:5px solid #a6a6a6"></div>
</div>

<!-- SKETCH -->
<svg class="a" style="left:0;top:0" width="1024" height="576" viewBox="0 0 1024 576">
<defs>
<g id="sk" fill="none" stroke="#111" stroke-linecap="round" stroke-linejoin="round">
  <path d="M415 146C400 146 388 154 381 166C375 178 375 196 380 206C385 217 394 227 402 231C410 234 422 232 432 227C442 220 449 208 452 198C457 185 457 172 453 162C449 152 440 146 430 146C424 145 419 145 415 146"/>
  <path d="M393 150C405 145 425 144 438 149M445 155C452 165 455 180 452 195"/>
  <path d="M409 167C404 180 400 195 400 205C400 213 400 220 401 225M395 203L410 203M401 225C408 227 416 227 423 226"/>
  <path d="M409 234L409 239M424 234C424 238 425 242 426 245"/>
  <path d="M297.5 243.5C299.0 243.2 303.8 242.4 306.7 242.0C309.6 241.6 313.6 241.2 315.0 241.0"/>
  <path d="M315.0 241.0C315.6 242.7 317.4 247.7 318.7 251.0C319.9 254.3 321.2 258.2 322.5 261.0C323.8 263.8 325.9 265.4 326.7 267.7C327.4 269.9 328.0 272.3 327.0 274.3C326.0 276.3 323.1 278.8 320.8 279.7C318.6 280.6 315.4 280.6 313.3 279.7C311.2 278.8 309.2 275.2 308.3 274.3"/>
  <path d="M297.5 243.5C297.6 245.3 296.8 249.5 298.3 254.3C299.9 259.2 305.0 269.1 306.7 272.7C308.3 276.3 308.1 275.4 308.3 276.0"/>
  <path d="M327.5 271.0C329.6 272.7 336.0 277.9 340.0 281.0C344.0 284.1 348.6 286.6 351.7 289.3C354.7 292.1 356.4 294.6 358.3 297.7C360.3 300.7 362.1 304.3 363.3 307.7C364.6 311.0 365.4 316.0 365.8 317.7"/>
  <path d="M306.7 274.3C308.1 276.6 311.9 282.9 315.0 287.7C318.1 292.4 321.7 298.2 325.0 302.7C328.3 307.1 331.9 310.7 335.0 314.3C338.1 317.9 341.1 322.1 343.3 324.3C345.6 326.6 346.1 327.4 348.3 327.7C350.6 327.9 353.6 327.4 356.7 326.0C359.7 324.6 363.3 322.4 366.7 319.3C370.0 316.3 375.0 309.6 376.7 307.7"/>
  <path d="M311.7 282.7C313.6 285.7 319.2 296.0 323.3 301.0C327.5 306.0 333.1 309.9 336.7 312.7C340.3 315.4 341.7 315.7 345.0 317.7C348.3 319.6 353.3 324.1 356.7 324.3C360.0 324.6 363.6 320.2 365.0 319.3" opacity="0.8"/>
  <path d="M418.0 246.8C414.7 247.8 404.1 250.3 398.3 252.7C392.6 255.0 388.1 257.7 383.3 261.0C378.6 264.3 373.9 268.5 370.0 272.7C366.1 276.8 362.8 281.6 360.0 286.0C357.2 290.4 355.6 294.9 353.3 299.3C351.1 303.8 348.3 308.8 346.7 312.7C345.0 316.6 343.9 321.0 343.3 322.7"/>
  <path d="M406.7 248.5C403.9 250.0 395.0 254.2 390.0 257.7C385.0 261.1 380.8 264.9 376.7 269.3C372.5 273.8 368.3 279.9 365.0 284.3C361.7 288.8 358.9 292.4 356.7 296.0C354.4 299.6 353.1 302.9 351.7 306.0C350.3 309.1 348.5 312.2 348.3 314.3C348.2 316.4 350.8 317.7 350.8 318.5C350.8 319.3 348.8 319.2 348.3 319.3"/>
  <path d="M391.7 261.0C390.3 263.2 386.1 269.9 383.3 274.3C380.6 278.8 377.2 282.9 375.0 287.7C372.8 292.4 371.1 297.9 370.0 302.7C368.9 307.4 368.8 311.3 368.3 316.0C367.9 320.7 367.6 328.5 367.5 331.0"/>
  <path d="M396.7 259.3C395.6 263.2 391.9 276.3 390.0 282.7C388.1 289.1 386.9 292.9 385.0 297.7C383.1 302.4 380.6 307.4 378.3 311.0C376.1 314.6 372.8 317.9 371.7 319.3" opacity="0.8"/>
  <path d="M376.7 266.0C378.3 264.3 380.3 262.9 383.3 261.8C386.4 260.7 392.6 258.9 395.0 259.3C397.4 259.8 397.2 261.8 397.5 264.3C397.8 266.8 397.6 271.1 396.7 274.3C395.7 277.5 393.9 281.6 391.7 283.5C389.4 285.4 386.0 285.7 383.3 286.0C380.7 286.3 377.6 286.3 375.8 285.2C374.1 284.1 373.4 281.6 373.0 279.3C372.6 277.1 372.7 274.1 373.3 271.8C373.9 269.6 375.0 267.7 376.7 266.0Z"/>
  <path d="M379.3 265.2L380.0 269.3" opacity="0.6"/>
  <path d="M438.3 254.3C440.3 254.1 446.4 253.1 450.0 252.7C453.6 252.2 457.2 251.0 460.0 251.8C462.8 252.7 464.4 255.3 466.7 257.7C468.9 260.0 470.8 262.1 473.3 266.0C475.8 269.9 479.2 276.0 481.7 281.0C484.2 286.0 486.7 291.6 488.3 296.0C490.0 300.4 491.7 304.9 491.7 307.7C491.7 310.4 490.6 311.0 488.3 312.7C486.1 314.3 482.5 316.6 478.3 317.7C474.2 318.8 468.6 319.1 463.3 319.3C458.1 319.6 449.4 319.3 446.7 319.3"/>
  <path d="M440.0 256.0C442.5 255.9 451.1 254.3 455.0 255.2C458.9 256.0 460.6 258.6 463.3 261.0C466.1 263.4 469.2 266.3 471.7 269.3C474.2 272.4 476.4 275.7 478.3 279.3C480.3 282.9 481.9 286.6 483.3 291.0C484.7 295.4 486.1 303.5 486.7 306.0" opacity="0.85"/>
  <path d="M435.0 252.7C435.1 255.4 435.4 264.1 435.8 269.3C436.2 274.6 436.2 281.0 437.5 284.3C438.8 287.7 441.2 288.8 443.3 289.3C445.4 289.9 447.8 289.3 450.0 287.7C452.2 286.0 454.9 282.4 456.7 279.3C458.5 276.3 460.0 272.4 460.8 269.3C461.7 266.3 462.1 263.5 461.7 261.0C461.2 258.5 458.9 255.4 458.3 254.3"/>
  <path d="M435.8 254.3C436.5 258.2 438.8 270.2 440.0 277.7C441.2 285.2 441.9 292.7 443.3 299.3C444.7 306.0 446.4 312.7 448.3 317.7C450.3 322.7 453.3 327.0 455.0 329.3C456.7 331.7 457.8 331.4 458.3 331.8"/>
  <path d="M439.2 269.3C440.1 272.9 442.9 284.3 445.0 291.0C447.1 297.7 449.7 303.5 451.7 309.3C453.6 315.2 455.8 323.2 456.7 326.0"/>
  <path d="M440.0 257.7C441.1 259.6 445.0 266.0 446.7 269.3C448.3 272.7 449.4 276.3 450.0 277.7" opacity="0.8"/>
  <path d="M464.2 266.0C465.1 268.5 468.5 276.3 470.0 281.0C471.5 285.7 472.4 289.6 473.3 294.3C474.3 299.1 475.3 304.9 475.8 309.3C476.4 313.8 476.5 319.1 476.7 321.0"/>
  <path d="M468.3 269.3C469.4 272.9 474.0 285.4 475.0 291.0C476.0 296.6 474.3 300.7 474.2 302.7" opacity="0.7"/>
  <path d="M465.0 302.7C466.1 303.5 468.6 305.7 471.7 307.7C474.7 309.6 479.7 312.1 483.3 314.3C486.9 316.6 491.7 319.9 493.3 321.0" opacity="0.6"/>
  <path d="M466.7 304.3C466.9 306.0 468.9 310.4 468.3 314.3C467.8 318.2 465.0 325.3 463.3 327.7C461.7 330.0 460.6 329.1 458.3 328.5C456.1 327.9 452.2 326.7 450.0 324.3C447.8 322.0 446.4 317.4 445.0 314.3C443.6 311.3 442.2 307.4 441.7 306.0" opacity="0.9"/>
  <path d="M481.7 319.3L486.7 331.8"/>
  <path d="M425.0 236.0L425.5 244.3"/>
  <path d="M421.7 244.3C419.7 245.0 413.6 247.1 410.0 248.5C406.4 249.9 401.7 252.0 400.0 252.7"/>
  <path d="M416.7 282.7C416.1 286.0 414.2 294.5 413.3 302.7C412.5 310.9 411.9 327.0 411.7 331.8"/>
  <path d="M363.3 326.0C363.2 330.2 362.8 342.7 362.5 351.0C362.2 359.3 362.1 369.1 361.7 376.0C361.2 382.9 360.0 388.5 360.0 392.7C360.0 396.8 361.8 396.6 361.7 401.0C361.5 405.4 359.6 416.3 359.2 419.3"/>
  <path d="M370.8 326.0C370.7 328.8 370.0 336.3 370.0 342.7C370.0 349.1 370.7 360.7 370.8 364.3"/>
  <path d="M366.7 329.3C366.5 334.3 365.8 350.2 365.8 359.3C365.8 368.5 366.5 380.2 366.7 384.3" opacity="0.85"/>
  <path d="M363.3 351.0C363.9 353.8 365.0 362.7 366.7 367.7C368.3 372.7 370.6 377.4 373.3 381.0C376.1 384.6 379.7 387.2 383.3 389.3C386.9 391.4 391.1 392.7 395.0 393.5C398.9 394.3 403.9 394.5 406.7 394.3C409.4 394.2 410.8 392.9 411.7 392.7"/>
  <path d="M360.0 392.7C360.8 393.5 363.1 398.2 365.0 397.7C366.9 397.1 370.6 390.7 371.7 389.3" opacity="0.7"/>
  <path d="M411.7 326.0C411.7 329.6 411.4 342.1 411.7 347.7C411.9 353.2 412.4 355.2 413.3 359.3C414.3 363.5 416.2 368.8 417.5 372.7C418.8 376.6 420.3 381.0 420.8 382.7"/>
  <path d="M392.5 348.2C396.0 348.1 406.2 348.0 413.3 347.8C420.4 347.7 431.4 347.4 435.0 347.3"/>
  <path d="M438.3 368.5C436.7 369.3 431.7 371.4 428.3 373.5C425.0 375.6 421.1 378.1 418.3 381.0C415.6 383.9 413.6 387.7 411.7 391.0C409.7 394.3 408.1 397.4 406.7 401.0C405.3 404.6 404.0 409.3 403.3 412.7C402.6 416.0 402.6 419.6 402.5 421.0"/>
  <path d="M433.3 371.0C431.4 372.4 424.9 376.0 421.7 379.3C418.5 382.7 416.4 386.8 414.2 391.0C411.9 395.2 410.0 399.6 408.3 404.3C406.7 409.1 404.9 416.8 404.2 419.3" opacity="0.8"/>
  <path d="M416.7 396.0C418.9 394.9 425.6 391.8 430.0 389.3C434.4 386.8 438.9 383.8 443.3 381.0C447.8 378.2 454.4 374.1 456.7 372.7"/>
  <path d="M403.3 419.3C405.6 418.9 412.2 418.2 416.7 416.8C421.1 415.4 425.8 413.4 430.0 411.0C434.2 408.6 438.3 405.7 441.7 402.7C445.0 399.6 447.5 396.6 450.0 392.7C452.5 388.8 455.0 383.5 456.7 379.3C458.3 375.2 459.3 370.7 460.0 367.7C460.7 364.6 460.7 362.1 460.8 361.0"/>
  <path d="M405.0 421.8C408.3 421.4 419.2 421.1 425.0 419.3C430.8 417.5 435.8 414.1 440.0 411.0C444.2 407.9 448.3 402.7 450.0 401.0" opacity="0.7"/>
  <path d="M454.2 326.0C453.9 329.3 452.4 338.8 452.5 346.0C452.6 353.2 454.6 365.4 455.0 369.3"/>
  <path d="M455.0 392.7L456.7 421.8"/>
  <path d="M465.0 376.0L466.7 421.8" opacity="0.8"/>
  <path d="M470.0 406.0L470.8 421.8" opacity="0.6"/>
  <path d="M368.3 409.3C370.8 410.4 378.1 414.1 383.3 416.0C388.6 417.9 397.2 420.2 400.0 421.0" opacity="0.35"/>
  <path d="M358.3 418.0C358.5 421.3 358.3 431.1 359.2 438.0C360.0 444.9 361.5 451.9 363.3 459.7C365.1 467.4 367.8 475.6 370.0 484.7C372.2 493.7 375.6 509.0 376.7 513.8"/>
  <path d="M361.7 418.0C361.7 422.2 361.0 434.7 361.7 443.0C362.4 451.3 364.0 460.2 365.8 468.0C367.6 475.8 370.6 483.6 372.5 489.7C374.4 495.8 376.7 502.2 377.5 504.7"/>
  <path d="M362.5 459.7C363.5 463.3 366.2 474.4 368.3 481.3C370.4 488.3 373.1 496.9 375.0 501.3C376.9 505.8 379.2 506.9 380.0 508.0" opacity="0.8"/>
  <path d="M403.7 421.3C403.8 426.3 403.8 440.8 404.2 451.3C404.5 461.9 405.3 474.9 405.8 484.7C406.4 494.4 407.2 505.5 407.5 509.7"/>
  <path d="M407.5 426.3C407.6 431.9 407.8 449.9 408.3 459.7C408.9 469.4 409.9 477.2 410.8 484.7C411.8 492.2 413.6 501.3 414.2 504.7"/>
  <path d="M410.8 433.0C410.9 437.4 410.9 451.6 411.3 459.7C411.8 467.7 412.6 475.8 413.3 481.3C414.1 486.9 415.3 488.8 415.8 493.0C416.4 497.2 416.5 504.1 416.7 506.3" opacity="0.85"/>
  <path d="M406.7 498.0L408.3 508.8"/>
  <path d="M408.3 508.8L410.8 499.7"/>
  <path d="M410.8 499.7L412.5 506.3"/>
  <path d="M412.5 506.3L415.0 496.3"/>
  <path d="M415.0 496.3L418.0 499.5"/>
  <path d="M454.7 418.0L454.7 448.0"/>
  <path d="M460.8 418.0C461.4 420.8 463.5 429.9 464.2 434.7C464.9 439.4 465.4 442.2 465.0 446.3C464.6 450.5 463.1 455.5 461.7 459.7C460.3 463.8 457.5 469.4 456.7 471.3"/>
  <path d="M469.2 418.0C468.8 420.8 467.5 429.1 466.7 434.7C465.8 440.2 465.3 445.8 464.2 451.3C463.1 456.9 460.7 465.2 460.0 468.0"/>
  <path d="M388.3 418.0C390.3 418.5 395.3 420.4 400.0 421.0C404.7 421.6 411.4 421.8 416.7 421.3C421.9 420.8 429.2 418.6 431.7 418.0" opacity="0.4"/>
  <path d="M482.5 318.9C483.9 322.4 488.0 333.1 490.8 340.2C493.5 347.2 496.1 354.7 499.0 361.4C502.0 368.1 505.3 375.2 508.5 380.3C511.6 385.4 514.4 388.6 517.9 392.1C521.5 395.7 527.8 400.0 529.7 401.6"/>
  <path d="M529.7 401.6C529.4 403.1 528.8 407.9 527.4 411.0C526.0 414.2 524.0 418.3 521.5 420.5C518.9 422.6 513.6 423.4 512.0 424.0"/>
  <path d="M454.2 323.6C455.7 327.2 459.7 337.4 463.6 344.9C467.6 352.4 473.1 361.8 477.8 368.5C482.5 375.2 489.6 382.3 492.0 385.0"/>
  <path d="M462.4 342.5C464.6 346.1 471.3 357.5 475.4 363.8C479.6 370.1 485.3 377.5 487.2 380.3" opacity="0.7"/>
  <path d="M490.8 340.2C491.8 343.3 494.3 352.7 496.7 359.0C499.0 365.3 502.6 373.2 505.0 377.9C507.3 382.7 509.9 385.8 510.9 387.4" opacity="0.7"/>
  <path d="M494.8 392.8C494.9 391.3 496.2 389.0 497.9 387.9C499.6 386.8 502.6 386.2 505.0 386.2C507.3 386.2 510.3 386.8 512.0 387.9C513.7 389.0 515.3 391.2 515.1 392.8C514.9 394.4 512.7 396.6 510.9 397.5C509.0 398.5 506.1 398.8 503.8 398.7C501.5 398.6 498.7 397.8 497.2 396.8C495.7 395.9 494.7 394.3 494.8 392.8Z"/>
  <path d="M497.9 392.1C498.8 394.5 501.6 401.0 503.8 406.3C505.9 411.6 509.7 421.0 510.9 424.0"/>
  <path d="M453.0 323.6C452.8 329.5 451.8 351.6 451.8 359.0C451.8 366.5 452.8 366.9 453.0 368.5"/>
  <path d="M454.2 368.5L454.6 435.8" opacity="0"/>
  <path d="M440.0 381.5L454.2 373.2" opacity="0"/>
  <path d="M457.7 399.2L463.6 435.8" opacity="0.7"/>
  <path d="M464.8 377.9L466.0 418.1" opacity="0.5"/>
  <path d="M449 506.5L448.4 512.2" stroke-width="1.6"/>
  <path d="M301 233l.6 .3"/>
  <g stroke-width="1.45" stroke="#151515">
  <path d="M505.9 226.6C503.5 224 500.5 223.8 498.6 224.6C494 227 490.5 231.5 490 236.6C489.7 241 490 245 491.3 247.2C493 250.5 495 252.5 497.3 252.5C499.5 252.5 501.5 251.8 503.3 250.5"/>
  <path d="M505.2 233.9C503.5 233.5 501.7 234 500.6 235.2C499.5 237 499 239 499.3 240.6C500 242.5 501.3 243.5 502.6 243.2C504 242.5 505.3 241 505.9 239.2C506.3 237.5 506.6 235.5 506.6 233.9C506.6 237 507 240.5 507.9 243.2"/>
  <path d="M515.9 227.3L515.6 239.2M515.9 230.3L525.2 228M525.4 222L524.9 236.6"/>
  <path d="M541.1 228.6C539.3 229 537.6 230 536.5 231.3C535 233.2 534.2 235.4 534.5 237.2C535 238.6 536.1 239 537.1 238.6C539.1 237.6 540.9 235.9 542.4 233.9C543.9 231.8 545 229.6 545.7 227.3C546.2 225 546.8 222.6 547.7 220.6C548.9 219.2 550.5 219 551.7 220C553 221.2 553.8 222.8 553.7 224.6C553.4 227.4 552.4 230.2 551.1 232.6C550.2 234.3 549 235.9 547.7 237.2"/>
  <path d="M557.7 227.3C559.2 230.8 561.2 234 563.7 236.6C565.2 237.8 567 238.6 569 238.6"/>
  <path d="M570.3 235.9C569.3 237 569 238 569.6 238.8C570.6 239.9 571.8 240.2 573 239.9C574.8 239.5 576.2 238.5 577 237.2C577.3 235.8 576 234.2 574.3 233.9C572.8 234 571.3 234.8 570.3 235.9"/>
  <path d="M577 235.2C579.6 234.8 582.3 234.4 584.9 233.9C586.3 233.6 587.7 233.2 588.9 232.6C589.8 234.2 590.6 235.8 591.6 237.2C592.3 238 593.2 238.5 594.2 238.6"/>
  <path d="M596.9 237.9C599 236 601.2 234.2 603.5 232.6C604.7 231.8 606.1 231.3 607.5 231.3C608.8 231.8 609.6 232.8 609.5 233.9C608.8 235 607.6 235.6 606.2 235.9C605.1 236.4 603.9 236.8 602.9 237.2C603.8 238.3 605 239.2 606.2 239.9M608.2 245.9l.4 .4"/>
  </g>
</g>
</defs>
<use href="#sk" stroke-width="1.1"/>
</svg>

<!-- NAVIGATOR PANEL -->
<div id="navp" class="a" style="left:757px;top:57px;width:267px;height:87px;background:#262626;">
  <div class="hdr" style="left:0;top:0;width:267px;"><svg class="a" style="left:244.2px;top:2.6px" width="7.6" height="7.6" viewBox="0 0 9 9"><path d="M4.6 2.4H1.2V7.8H6.6V4.6" fill="none" stroke="#b4b0aa" stroke-width="1.2"/><path d="M3.8 5.2L7.6 1.4M5 1H8V4" fill="none" stroke="#b4b0aa" stroke-width="1.2"/></svg><svg class="a" style="left:256.6px;top:3.2px" width="7" height="7" viewBox="0 0 8 8"><path d="M1.2 1.2L6.8 6.8M6.8 1.2L1.2 6.8" stroke="#c8c4bc" stroke-width="2.1"/></svg><div class="t" style="left:107px;letter-spacing:-0.209px">Hoa tiêu</div></div>
  <div class="btn" style="left:3px;top:19px;width:17px;height:17px" ><svg class="a" style="left:0;top:0" width="17" height="17" viewBox="0 0 17 17"><circle cx="7" cy="7.2" r="3.9" fill="none" stroke="#f2f2f2" stroke-width="1.2"/><path d="M9.73 9.93L12.93 12.93" stroke="#f2f2f2" stroke-width="1.6"/><path d="M6.4 6.2L7.3 5.4V9.2" fill="none" stroke="#f2f2f2" stroke-width=".9"/></svg></div>
  <div class="sep" style="left:24px;top:24px;height:7px;background:#777"></div>
  <div class="btn" style="left:28px;top:19px;width:17px;height:17px" ><svg class="a" style="left:0;top:0" width="17" height="17" viewBox="0 0 17 17"><circle cx="6.8" cy="7" r="3.9" fill="none" stroke="#f2f2f2" stroke-width="1.2"/><path d="M9.53 9.73L12.73 12.73" stroke="#f2f2f2" stroke-width="1.6"/><path d="M4.6 7H9M6.8 4.8V9.2" stroke="#f2f2f2" stroke-width="1.3"/></svg></div>
  <div class="btn" style="left:49px;top:19px;width:17px;height:17px" ><svg class="a" style="left:0;top:0" width="17" height="17" viewBox="0 0 17 17"><rect x="2.7" y="3.9" width="11.8" height="8.8" fill="none" stroke="#d8d8d8" stroke-width="1.1"/><path d="M4 6.4L6.4 8.3L4 10.2ZM13.2 6.4L10.8 8.3L13.2 10.2Z" fill="#f2f2f2"/><path d="M4.2 5.2h2M11 5.2h2M4.2 11.4h2M11 11.4h2" stroke="#bbb" stroke-width=".8"/></svg></div>
  <div class="btn" style="left:69px;top:19px;width:17px;height:17px" ><svg class="a" style="left:0;top:0" width="17" height="17" viewBox="0 0 17 17"><circle cx="6.8" cy="7" r="3.9" fill="none" stroke="#f2f2f2" stroke-width="1.2"/><path d="M9.53 9.73L12.73 12.73" stroke="#f2f2f2" stroke-width="1.6"/><path d="M4.6 7H9" stroke="#f2f2f2" stroke-width="1.3"/></svg></div>
  <div class="sep" style="left:90px;top:24px;height:7px;background:#777"></div>
  <div class="btn" style="left:94px;top:19px;width:17px;height:17px" ><svg class="a" style="left:0;top:0" width="17" height="17" viewBox="0 0 17 17"><g><path d="M5.2 4.4A5.2 5.2 0 1 1 3.6 9.8" fill="none" stroke="#f2f2f2" stroke-width="1.2"/><path d="M3 3.2L6.6 3.4L5.2 6.4Z" fill="#f2f2f2"/><path d="M6.4 7L11 5.8L12 9.4L7.4 10.8Z" fill="#f2f2f2"/></g></svg></div>
  <div class="btn dk" style="left:115px;top:19px;width:17px;height:17px" ><svg class="a" style="left:0;top:0" width="17" height="17" viewBox="0 0 17 17"><rect x="5" y="5.2" width="7" height="6.4" fill="#f2f2f2"/><path d="M3 3.2L5.4 5.6M14 3.2L11.6 5.6M3 13.6L5.4 11.2M14 13.6L11.6 11.2" stroke="#f2f2f2" stroke-width="1.1"/></svg></div>
  <div class="btn" style="left:135px;top:19px;width:17px;height:17px" ><svg class="a" style="left:0;top:0" width="17" height="17" viewBox="0 0 17 17"><g transform="translate(17 0) scale(-1 1)"><path d="M5.2 4.4A5.2 5.2 0 1 1 3.6 9.8" fill="none" stroke="#f2f2f2" stroke-width="1.2"/><path d="M3 3.2L6.6 3.4L5.2 6.4Z" fill="#f2f2f2"/><path d="M6.4 7L11 5.8L12 9.4L7.4 10.8Z" fill="#f2f2f2"/></g></svg></div>
  <div class="sep" style="left:156px;top:24px;height:7px;background:#777"></div>
  <div class="btn" style="left:160px;top:19px;width:17px;height:17px" ><svg class="a" style="left:0;top:0" width="17" height="17" viewBox="0 0 17 17"><rect x="3" y="7" width="4.4" height="6.2" fill="#f2f2f2"/><rect x="10.2" y="7" width="3.8" height="6.2" fill="none" stroke="#f2f2f2" stroke-width="1"/><path d="M5 6.4C5.4 2.6 11.6 2.6 12 6.4" fill="none" stroke="#f2f2f2" stroke-width="1"/><path d="M8.6 4V13.6" stroke="#ccc" stroke-width=".7"/></svg></div>
  <div class="a" style="left:0;top:38.8px;width:267px;height:45.2px;background:#4a4948;overflow:hidden">
    <div class="a" style="left:111px;top:0;width:45px;height:46px;background:#fff"></div>
    <div class="a" style="left:156px;top:0;width:8px;height:42px;background:#585858"></div>
    <div class="a" style="left:109px;top:-1px;width:56px;height:44.2px;border:2px solid #e0222a;box-sizing:border-box;border-top:none"></div>
  </div>
</div>

<!-- LAYER PANEL -->
<div id="layerp" class="a" style="left:757px;top:144px;width:267px;height:221px;background:#262626;">
  <div class="hdr" style="left:0;top:1px;width:267px;"><svg class="a" style="left:244.2px;top:2.6px" width="7.6" height="7.6" viewBox="0 0 9 9"><path d="M4.6 2.4H1.2V7.8H6.6V4.6" fill="none" stroke="#b4b0aa" stroke-width="1.2"/><path d="M3.8 5.2L7.6 1.4M5 1H8V4" fill="none" stroke="#b4b0aa" stroke-width="1.2"/></svg><svg class="a" style="left:256.6px;top:3.2px" width="7" height="7" viewBox="0 0 8 8"><path d="M1.2 1.2L6.8 6.8M6.8 1.2L1.2 6.8" stroke="#c8c4bc" stroke-width="2.1"/></svg><div class="t" style="left:116px;letter-spacing:-0.844px">Lớp</div></div>
  <div class="t" style="left:5px;top:23px;font-size:8.5px;color:#d0d0d0;letter-spacing:-0.201px">Độ trong</div>
  <div class="a" style="left:72px;top:22px;width:155px;height:11px;background:linear-gradient(to right,#80c6fa,#4a93d1);"></div>
  <div class="t" style="left:232px;top:23px;font-size:8.5px;color:#d0d0d0;letter-spacing:-0.222px">100 %</div>
  <div class="t" style="left:5px;top:42px;font-size:8.5px;color:#d0d0d0;letter-spacing:-0.205px">Pha trộn</div>
  <div class="a" style="left:74px;top:38px;width:188px;height:16px;background:#444;border-radius:2px"></div>
  <div class="t" style="left:75px;top:42px;font-size:8.5px;color:#d0d0d0;letter-spacing:-0.378px">Bình thường</div>
  <div class="a" style="left:253px;top:45px;width:0;height:0;border-left:3px solid transparent;border-right:3px solid transparent;border-top:3px solid #aaa"></div>
  <div class="a" style="left:7px;top:61px;width:9px;height:9px;border:1px solid #ccc;box-sizing:border-box;"></div>
  <div class="t" style="left:19px;top:62px;font-size:8.5px;color:#d0d0d0;letter-spacing:-0.260px">Bảo vệ alpha</div>
  <div class="a" style="left:94px;top:61px;width:9px;height:9px;border:1px solid #4a4a4a;box-sizing:border-box;"></div>
  <div class="t" style="left:107px;top:62px;font-size:8.5px;color:#777;letter-spacing:-0.379px">Xén bớt</div>
  <div class="a" style="left:181px;top:61px;width:9px;height:9px;border:1px solid #ccc;box-sizing:border-box;"></div>
  <div class="t" style="left:194px;top:62px;font-size:8.5px;color:#d0d0d0;letter-spacing:-0.465px">Khóa</div>
  <div class="a" style="left:2px;top:76px;width:249px;height:118px;background:#4a4948;">
    <div class="a" style="left:0;top:0;width:14.5px;height:29px;background:#5e5e5e"></div>
    <div class="a" style="left:4px;top:11px;width:7px;height:7px;border-radius:50%;background:#d8d8d8"></div>
    <div class="a" style="left:15px;top:0;width:234px;height:29px;background:#559dd6;border-bottom:1px solid #2d5f8a;box-sizing:border-box"></div>
    <div class="a" style="left:26px;top:1.6px;width:25px;height:25.6px;background-color:#fff;background-image:linear-gradient(45deg,#e7e7e7 25%,transparent 25%,transparent 75%,#e7e7e7 75%),linear-gradient(45deg,#e7e7e7 25%,transparent 25%,transparent 75%,#e7e7e7 75%);background-size:6px 6px;background-position:0 0,3px 3px;"></div>
    <div class="t" style="left:64.7px;top:10.8px;font-size:9.5px;font-weight:bold;color:#fff;letter-spacing:-0.414px">Lớp1</div>
    <div class="a" style="left:230px;top:6px;width:17px;height:17px" ><svg class="a" style="left:0;top:0" width="17" height="17" viewBox="0 0 17 17"><g transform="translate(8.5 8.5)"><circle r="4.75" fill="#fff"/><rect x="-1.45" y="-6.60" width="2.90" height="3.30" fill="#fff" transform="rotate(0)"/><rect x="-1.45" y="-6.60" width="2.90" height="3.30" fill="#fff" transform="rotate(45)"/><rect x="-1.45" y="-6.60" width="2.90" height="3.30" fill="#fff" transform="rotate(90)"/><rect x="-1.45" y="-6.60" width="2.90" height="3.30" fill="#fff" transform="rotate(135)"/><rect x="-1.45" y="-6.60" width="2.90" height="3.30" fill="#fff" transform="rotate(180)"/><rect x="-1.45" y="-6.60" width="2.90" height="3.30" fill="#fff" transform="rotate(225)"/><rect x="-1.45" y="-6.60" width="2.90" height="3.30" fill="#fff" transform="rotate(270)"/><rect x="-1.45" y="-6.60" width="2.90" height="3.30" fill="#fff" transform="rotate(315)"/><circle r="1.78" fill="#4f9ad6"/></g></svg></div>
  </div>
  <div class="a" style="left:251px;top:76px;width:16px;height:118px;background:#333"></div>
  <div class="a" style="left:254px;top:79px;width:0;height:0;border-left:3px solid transparent;border-right:3px solid transparent;border-bottom:5px solid #adadad"></div>
  <div class="a" style="left:252px;top:85px;width:14px;height:99px;border-radius:4.5px;background:linear-gradient(to right,#727272,#7a7a7a 40%,#666);"></div>
  <div class="a" style="left:254px;top:187px;width:0;height:0;border-left:3px solid transparent;border-right:3px solid transparent;border-top:5px solid #adadad"></div>
  <div class="btn" style="left:4px;top:197px;width:17px;height:17px" ><svg class="a" style="left:0;top:0" width="17" height="17" viewBox="0 0 17 17"><path d="M3.8 3.1H10.2L13.399999999999999 6.300000000000001V13.9H3.8Z" fill="none" stroke="#f2f2f2" stroke-width="1.1"/><path d="M10.2 3.1V6.300000000000001H13.399999999999999" fill="none" stroke="#f2f2f2" stroke-width="0.88"/></svg></div>
  <div class="btn" style="left:25px;top:197px;width:17px;height:17px" ><svg class="a" style="left:0;top:0" width="17" height="17" viewBox="0 0 17 17"><path d="M3.8 3.1H10.2L13.399999999999999 6.300000000000001V13.9H3.8Z" fill="none" stroke="#f2f2f2" stroke-width="1.1"/><path d="M10.2 3.1V6.300000000000001H13.399999999999999" fill="none" stroke="#f2f2f2" stroke-width="0.88"/><text x="8.4" y="11.6" font-family="Liberation Sans" font-size="6.5" font-weight="bold" fill="#f2f2f2" text-anchor="middle">8</text></svg></div>
  <div class="btn" style="left:45px;top:197px;width:17px;height:17px" ><svg class="a" style="left:0;top:0" width="17" height="17" viewBox="0 0 17 17"><path d="M3.8 3.1H10.2L13.399999999999999 6.300000000000001V13.9H3.8Z" fill="none" stroke="#f2f2f2" stroke-width="1.1"/><path d="M10.2 3.1V6.300000000000001H13.399999999999999" fill="none" stroke="#f2f2f2" stroke-width="0.88"/><text x="8.4" y="11.6" font-family="Liberation Sans" font-size="6.5" font-weight="bold" fill="#f2f2f2" text-anchor="middle">1</text></svg></div>
  <div class="btn" style="left:65px;top:197px;width:23px;height:17px" ><svg class="a" style="left:0;top:0" width="23" height="17" viewBox="0 0 23 17"><path d="M3.4 2.6H7.8L11.0 5.800000000000001V12.2H3.4Z" fill="none" stroke="#d0d0d0" stroke-width="1"/><path d="M7.8 2.6V5.800000000000001H11.0" fill="none" stroke="#d0d0d0" stroke-width="0.80"/><path d="M7.2 11.6H12.2M9.7 9.1V14.1" stroke="#f2f2f2" stroke-width="1.4"/><path d="M15.6 7L20 7L17.8 9.6Z" fill="#f2f2f2"/></svg></div>
  <div class="btn" style="left:91px;top:197px;width:17px;height:17px" ><svg class="a" style="left:0;top:0" width="17" height="17" viewBox="0 0 17 17"><path d="M3 4.2H7.2L8.4 5.6H14V12.8H3Z" fill="#f2f2f2"/></svg></div>
  <div class="sep" style="left:112px;top:202px;height:7px;background:#777"></div>
  <div class="btn" style="left:116px;top:197px;width:17px;height:17px" ><svg class="a" style="left:0;top:0" width="17" height="17" viewBox="0 0 17 17"><rect x="3.8" y="6" width="7.6" height="7.6" fill="none" stroke="#bdbdbd" stroke-width="1.1"/><path d="M6 6V3.8H13.6V11.4H11.4" fill="none" stroke="#bdbdbd" stroke-width="1.1"/></svg></div>
  <div class="btn dk" style="left:137px;top:197px;width:17px;height:17px" ><svg class="a" style="left:0;top:0" width="17" height="17" viewBox="0 0 17 17"><rect x="2.8" y="3.4" width="3.2" height="3.2" fill="none" stroke="#f2f2f2" stroke-width=".9"/><rect x="2.8" y="9.6" width="3.2" height="3.2" fill="none" stroke="#f2f2f2" stroke-width=".9"/><rect x="9.4" y="5.6" width="4.6" height="4.6" fill="#f2f2f2"/><path d="M6 5H7.6V11.2H6M7.6 8H9.4" fill="none" stroke="#f2f2f2" stroke-width=".9"/></svg></div>
  <div class="sep" style="left:157px;top:202px;height:7px;background:#777"></div>
  <div class="btn dk" style="left:162px;top:197px;width:17px;height:17px" ><svg class="a" style="left:0;top:0" width="17" height="17" viewBox="0 0 17 17"><path d="M3 5.2H14M6.6 5V3.4H10.4V5" fill="none" stroke="#f2f2f2" stroke-width="1.2"/><path d="M4 6H13V14H4Z" fill="none" stroke="#f2f2f2" stroke-width="1.2"/><path d="M6.6 7V13M8.5 7V13M10.4 7V13" stroke="#f2f2f2" stroke-width="1.1"/></svg></div>
</div>

<svg class="a" style="left:0;top:0;pointer-events:none" width="1024" height="576" viewBox="0 0 1024 576">
<clipPath id="cpn"><rect x="868" y="96" width="45" height="41"/></clipPath><g clip-path="url(#cpn)"><use href="#sk" stroke-width="4" opacity=".4" transform="translate(846.7 86.7) scale(.102)"/></g>
<use href="#sk" stroke-width="6" opacity=".18" transform="translate(773 216.8) scale(.0575)"/>
</svg>

<!-- BRUSH SIZE PANEL -->
<div id="bsp" class="a" style="left:757px;top:365px;width:267px;height:165px;background:#262626;">
  <div class="hdr" style="left:0;top:1px;width:267px;"><div class="t" style="left:104px;letter-spacing:-0.461px">Brush Size</div><svg class="a" style="left:244.2px;top:2.6px" width="7.6" height="7.6" viewBox="0 0 9 9"><path d="M4.6 2.4H1.2V7.8H6.6V4.6" fill="none" stroke="#b4b0aa" stroke-width="1.2"/><path d="M3.8 5.2L7.6 1.4M5 1H8V4" fill="none" stroke="#b4b0aa" stroke-width="1.2"/></svg><svg class="a" style="left:256.6px;top:3.2px" width="7" height="7" viewBox="0 0 8 8"><path d="M1.2 1.2L6.8 6.8M6.8 1.2L1.2 6.8" stroke="#c8c4bc" stroke-width="2.1"/></svg></div>
  <div class="a" style="left:0;top:17px;width:252.5px;height:148px;background:#4a4948;">
    <div class="a" style="left:0.90px;top:0.5px;width:28.5px;height:36.5px;background:#5c5c5c"><div class="a" style="left:13.70px;top:13.95px;width:1.1px;height:1.1px;border-radius:50%;background:#f2f2f2;opacity:0.18"></div><div class="t" style="left:0;width:28.5px;text-align:center;top:28.5px;font-size:7.5px;color:#ededed">1</div></div>
    <div class="a" style="left:30.86px;top:0.5px;width:28.5px;height:36.5px;background:#5c5c5c"><div class="a" style="left:13.50px;top:13.75px;width:1.5px;height:1.5px;border-radius:50%;background:#f2f2f2;opacity:0.45"></div><div class="t" style="left:0;width:28.5px;text-align:center;top:28.5px;font-size:7.5px;color:#ededed">1.5</div></div>
    <div class="a" style="left:60.82px;top:0.5px;width:28.5px;height:36.5px;background:#5c5c5c"><div class="a" style="left:13.30px;top:13.55px;width:1.9px;height:1.9px;border-radius:50%;background:#f2f2f2;opacity:0.75"></div><div class="t" style="left:0;width:28.5px;text-align:center;top:28.5px;font-size:7.5px;color:#ededed">2</div></div>
    <div class="a" style="left:90.78px;top:0.5px;width:28.5px;height:36.5px;background:#5c5c5c"><div class="a" style="left:13.00px;top:13.25px;width:2.5px;height:2.5px;border-radius:50%;background:#f2f2f2;opacity:0.95"></div><div class="t" style="left:0;width:28.5px;text-align:center;top:28.5px;font-size:7.5px;color:#ededed">3</div></div>
    <div class="a" style="left:120.74px;top:0.5px;width:28.5px;height:36.5px;background:#5c5c5c"><div class="a" style="left:12.65px;top:12.90px;width:3.2px;height:3.2px;border-radius:50%;background:#f2f2f2;opacity:1"></div><div class="t" style="left:0;width:28.5px;text-align:center;top:28.5px;font-size:7.5px;color:#ededed">4</div></div>
    <div class="a" style="left:150.70px;top:0.5px;width:28.5px;height:36.5px;background:#5c5c5c"><div class="a" style="left:12.25px;top:12.50px;width:4.0px;height:4.0px;border-radius:50%;background:#f2f2f2;opacity:1"></div><div class="t" style="left:0;width:28.5px;text-align:center;top:28.5px;font-size:7.5px;color:#ededed">5</div></div>
    <div class="a" style="left:180.66px;top:0.5px;width:28.5px;height:36.5px;background:#5c5c5c"><div class="a" style="left:11.35px;top:11.60px;width:5.8px;height:5.8px;border-radius:50%;background:#f2f2f2;opacity:1"></div><div class="t" style="left:0;width:28.5px;text-align:center;top:28.5px;font-size:7.5px;color:#ededed">7</div></div>
    <div class="a" style="left:210.62px;top:0.5px;width:28.5px;height:36.5px;background:#5c5c5c"><div class="a" style="left:10.25px;top:10.50px;width:8.0px;height:8.0px;border-radius:50%;background:#f2f2f2;opacity:1"></div><div class="t" style="left:0;width:28.5px;text-align:center;top:28.5px;font-size:7.5px;color:#ededed">10</div></div>
    <div class="a" style="left:0.90px;top:38.0px;width:28.5px;height:36.5px;background:#5c5c5c"><div class="a" style="left:9.75px;top:9.50px;width:9.0px;height:9.0px;border-radius:50%;background:#f2f2f2;opacity:1"></div><div class="t" style="left:0;width:28.5px;text-align:center;top:28.5px;font-size:7.5px;color:#ededed">12</div></div>
    <div class="a" style="left:30.86px;top:38.0px;width:28.5px;height:36.5px;background:#5c5c5c"><div class="a" style="left:8.75px;top:8.50px;width:11.0px;height:11.0px;border-radius:50%;background:#f2f2f2;opacity:1"></div><div class="t" style="left:0;width:28.5px;text-align:center;top:28.5px;font-size:7.5px;color:#ededed">15</div></div>
    <div class="a" style="left:60.82px;top:38.0px;width:28.5px;height:36.5px;background:#5c5c5c"><div class="a" style="left:6.75px;top:6.50px;width:15.0px;height:15.0px;border-radius:50%;background:#f2f2f2;opacity:1"></div><div class="t" style="left:0;width:28.5px;text-align:center;top:28.5px;font-size:7.5px;color:#ededed">20</div></div>
    <div class="a" style="left:90.78px;top:38.0px;width:28.5px;height:36.5px;background:#5c5c5c"><div class="a" style="left:5.25px;top:5.00px;width:18px;height:18px;border-radius:50%;background:#f2f2f2;opacity:1"></div><div class="t" style="left:0;width:28.5px;text-align:center;top:28.5px;font-size:7.5px;color:#ededed">25</div></div>
    <div class="a" style="left:120.74px;top:38.0px;width:28.5px;height:36.5px;background:#5c5c5c"><div class="a" style="left:5.25px;top:5.00px;width:18px;height:18px;border-radius:50%;background:#f2f2f2;opacity:1"></div><div class="t" style="left:0;width:28.5px;text-align:center;top:28.5px;font-size:7.5px;color:#ededed">30</div></div>
    <div class="a" style="left:150.70px;top:38.0px;width:28.5px;height:36.5px;background:#5c5c5c"><div class="a" style="left:5.25px;top:5.00px;width:18px;height:18px;border-radius:50%;background:#f2f2f2;opacity:1"></div><div class="t" style="left:0;width:28.5px;text-align:center;top:28.5px;font-size:7.5px;color:#ededed">40</div></div>
    <div class="a" style="left:180.66px;top:38.0px;width:28.5px;height:36.5px;background:#5c5c5c"><div class="a" style="left:5.25px;top:5.00px;width:18px;height:18px;border-radius:50%;background:#f2f2f2;opacity:1"></div><div class="t" style="left:0;width:28.5px;text-align:center;top:28.5px;font-size:7.5px;color:#ededed">50</div></div>
    <div class="a" style="left:210.62px;top:38.0px;width:28.5px;height:36.5px;background:#5c5c5c"><div class="a" style="left:5.25px;top:5.00px;width:18px;height:18px;border-radius:50%;background:#f2f2f2;opacity:1"></div><div class="t" style="left:0;width:28.5px;text-align:center;top:28.5px;font-size:7.5px;color:#ededed">70</div></div>
    <div class="a" style="left:0.90px;top:75.5px;width:28.5px;height:36.5px;background:#5c5c5c"><div class="a" style="left:5.25px;top:5.50px;width:18px;height:18px;border-radius:50%;background:#f2f2f2;opacity:1"></div><div class="t" style="left:0;width:28.5px;text-align:center;top:28.5px;font-size:7.5px;color:#ededed">100</div></div>
    <div class="a" style="left:30.86px;top:75.5px;width:28.5px;height:36.5px;background:#5c5c5c"><div class="a" style="left:5.25px;top:5.50px;width:18px;height:18px;border-radius:50%;background:#f2f2f2;opacity:1"></div><div class="t" style="left:0;width:28.5px;text-align:center;top:28.5px;font-size:7.5px;color:#ededed">150</div></div>
    <div class="a" style="left:60.82px;top:75.5px;width:28.5px;height:36.5px;background:#5c5c5c"><div class="a" style="left:5.25px;top:5.50px;width:18px;height:18px;border-radius:50%;background:#f2f2f2;opacity:1"></div><div class="t" style="left:0;width:28.5px;text-align:center;top:28.5px;font-size:7.5px;color:#ededed">200</div></div>
    <div class="a" style="left:90.78px;top:75.5px;width:28.5px;height:36.5px;background:#5c5c5c"><div class="a" style="left:5.25px;top:5.50px;width:18px;height:18px;border-radius:50%;background:#f2f2f2;opacity:1"></div><div class="t" style="left:0;width:28.5px;text-align:center;top:28.5px;font-size:7.5px;color:#ededed">300</div></div>
    <div class="a" style="left:120.74px;top:75.5px;width:28.5px;height:36.5px;background:#5c5c5c"><div class="a" style="left:5.25px;top:5.50px;width:18px;height:18px;border-radius:50%;background:#f2f2f2;opacity:1"></div><div class="t" style="left:0;width:28.5px;text-align:center;top:28.5px;font-size:7.5px;color:#ededed">400</div></div>
    <div class="a" style="left:150.70px;top:75.5px;width:28.5px;height:36.5px;background:#5c5c5c"><div class="a" style="left:5.25px;top:5.50px;width:18px;height:18px;border-radius:50%;background:#f2f2f2;opacity:1"></div><div class="t" style="left:0;width:28.5px;text-align:center;top:28.5px;font-size:7.5px;color:#ededed">500</div></div>
    <div class="a" style="left:180.66px;top:75.5px;width:28.5px;height:36.5px;background:#5c5c5c"><div class="a" style="left:5.25px;top:5.50px;width:18px;height:18px;border-radius:50%;background:#f2f2f2;opacity:1"></div><div class="t" style="left:0;width:28.5px;text-align:center;top:28.5px;font-size:7.5px;color:#ededed">700</div></div>
    <div class="a" style="left:210.62px;top:75.5px;width:28.5px;height:36.5px;background:#5c5c5c"><div class="a" style="left:5.25px;top:5.50px;width:18px;height:18px;border-radius:50%;background:#f2f2f2;opacity:1"></div><div class="t" style="left:0;width:28.5px;text-align:center;top:28.5px;font-size:7.5px;color:#ededed">1000</div></div>
  </div>
  <div class="a" style="left:252.5px;top:17px;width:14.5px;height:148px;background:#2b2b2b"></div>
  <div class="a" style="left:256.5px;top:19px;width:0;height:0;border-left:3px solid transparent;border-right:3px solid transparent;border-bottom:5px solid #adadad"></div>
  <div class="a" style="left:253.3px;top:25.5px;width:13.5px;height:132px;border-radius:4.5px;background:linear-gradient(to right,#727272,#7a7a7a 40%,#666);"></div>
  <div class="a" style="left:256.5px;top:159.5px;width:0;height:0;border-left:3px solid transparent;border-right:3px solid transparent;border-top:5px solid #adadad"></div>
</div>

<!-- STATUS BAR -->
<div id="status" class="a" style="left:0;top:529px;width:1024px;height:17px;background:#292929;">
  <div class="t" style="left:5px;top:6px;font-size:8.5px;color:#d0d0d0;letter-spacing:-0.159px" id="st1">7086 * 7086 pixel</div>
  <div class="t" style="left:76px;top:6px;font-size:8.5px;color:#d0d0d0;letter-spacing:0.006px" id="st2">(30 * 30cm)</div>
  <div class="t" style="left:128px;top:6px;font-size:8.5px;color:#d0d0d0;letter-spacing:-0.056px" id="st3">600 dpi</div>
  <div class="t" style="left:163px;top:6px;font-size:8.5px;color:#d0d0d0;letter-spacing:-0.552px" id="st4">8 %</div>
  <div class="t" style="left:184px;top:6px;font-size:8.5px;color:#d0d0d0;letter-spacing:-0.246px" id="st5">( 6400, 2472 )</div>
  <div class="t" style="left:241px;top:6px;font-size:8.5px;color:#d0d0d0;letter-spacing:0.193px" id="st6">Vẽ một đường thẳng bằng cách giữ phím Shift, Thay đổi cỡ cọ bằng cách giữ phím Ctrl, Alt và kéo</div>
</div>

<!-- POPUP -->
<div id="popup" class="a" style="left:437px;top:473px;width:295px;height:34px;background:#262626;border:1px solid #777;border-radius:4px;box-sizing:border-box;">
  <div class="t" style="left:21px;top:6px;font-size:9.5px;color:#d2d2d2;letter-spacing:0.028px" id="pp1">You are not using the latest version of MediBang Paint.</div>
  <div class="t" style="left:6px;top:18px;font-size:9.5px;color:#d2d2d2;letter-spacing:0.017px" id="pp2">Please install the latest version of MediBang Paint found here.</div>
  <div class="a" style="left:276px;top:11px;width:11px;height:11px;border:1px solid #eee;box-sizing:border-box"></div>
  <svg class="a" style="left:276px;top:11px" width="11" height="11" viewBox="0 0 11 11"><path d="M3 3L8 8M8 3L3 8" stroke="#fff" stroke-width="1.6"/></svg>
</div>

<!-- TASKBAR -->
<div id="taskbar" class="a" style="left:0;top:546px;width:1024px;height:30px;background:linear-gradient(to right,#0a4a4e 0,#0c4b4f 220px,#17585a 300px,#175556 520px,#134c50 740px,#0a3e4b 760px,#083a46 1024px);overflow:hidden;">
  <!-- wallpaper-ish stars -->
  <svg class="a" style="left:0;top:0" width="1024" height="30" viewBox="0 0 1024 30" fill="#0f4648" opacity=".7">
    <path id="star" d="M0 -4L1.2 -1.2L4 -1.2L1.8 .6L2.6 3.6L0 1.8L-2.6 3.6L-1.8 .6L-4 -1.2L-1.2 -1.2Z" transform="translate(374 24)"/>
    <use href="#star" transform="translate(96 -12)"/><use href="#star" transform="translate(52 -2)"/><use href="#star" transform="translate(140 -6)"/><use href="#star" transform="translate(196 -14)"/><use href="#star" transform="translate(262 -4)"/>
    <g fill="none" stroke="#0c3f42" stroke-width="1"><path d="M320 12L325 6H339L344 12V30H320ZM320 12H344M325 6V3H339V6"/><path d="M327 20h2M335 20h2M329 24h6"/></g>
  </svg>
  <div class="a" style="left:223.5px;top:0;width:29.5px;height:30px;background:#a8252e"></div>
  <div class="a" style="left:223.5px;top:28.3px;width:29.5px;height:2px;background:#ff1a1a"></div>
  <div class="a" style="left:257px;top:0;width:35.5px;height:30px;background:#1b8173"></div>
  <div class="a" style="left:257px;top:28.3px;width:35.5px;height:2px;background:#a6e4da"></div>
  <div class="a" style="left:150px;top:28.3px;width:30px;height:2px;background:#9fdcd4"></div>
  <div class="a" style="left:187px;top:28.3px;width:29.5px;height:2px;background:#9fdcd4"></div>
  <svg class="a" style="left:0;top:0" width="300" height="30" viewBox="0 0 300 30">
    <!-- windows logo -->
    <path d="M12.2 10.6L17.2 9.9V14.7H12.2ZM17.9 9.8L24 9V14.7H17.9ZM12.2 15.4H17.2V20.1L12.2 19.4ZM17.9 15.4H24V21L17.9 20.2Z" fill="#fff"/>
    <!-- search -->
    <circle cx="56" cy="12.4" r="3.6" fill="none" stroke="#fff" stroke-width="1.2"/><path d="M53.4 15L48.6 20" stroke="#fff" stroke-width="1.3"/>
    <!-- task view -->
    <rect x="84.5" y="10.5" width="10.5" height="9" rx="1" fill="none" stroke="#cdeee8" stroke-width="1"/><path d="M82.5 12V18M97.2 12V18" stroke="#cdeee8" stroke-width="1"/>
    <!-- keyboard-ish app -->
    <g><rect x="120" y="8.4" width="7.4" height="6.4" rx="1" fill="#f4f0ee"/><rect x="128.6" y="8" width="7.6" height="6.6" rx="1" fill="#f4f0ee"/><rect x="124.4" y="14.2" width="8" height="6.4" rx="1" fill="#f6f2f0"/><rect x="122.4" y="10.2" width="2.6" height="2.6" fill="#c8323a"/><rect x="131" y="10" width="2.4" height="2.6" fill="#d0555c"/><rect x="127.2" y="16" width="2.6" height="2.8" fill="#c8323a"/></g>
    <!-- explorer -->
    <path d="M156.6 9.4H162L163.4 10.8H172.4V20.6H156.6Z" fill="#f5cf55"/><path d="M156.6 12.4H172.4V20.6H156.6Z" fill="#f9dd76"/><path d="M160 15.4H169.4V21.8H166.6V18.6H162.8V21.8H160Z" fill="#2f9ae0"/>
    <!-- zalo -->
    <path d="M202 6.4C207.4 6.4 211 9.8 211 14.2C211 18.6 207.2 22 202 22C200.4 22 199 21.7 197.8 21.2L194.4 22.2L195.4 19.6C193.8 18.2 193 16.3 193 14.2C193 9.8 196.6 6.4 202 6.4Z" fill="#fff" stroke="#2a6fe0" stroke-width=".6"/>
    <text x="202" y="16.4" font-family="Liberation Sans" font-weight="bold" font-size="5.6" fill="#1a6be0" text-anchor="middle">Zalo</text>
    <!-- opera -->
    <path fill-rule="evenodd" d="M239.4 6.2C244 6.2 247.4 10 247.4 15C247.4 20 244 23.8 239.4 23.8C234.8 23.8 231.4 20 231.4 15C231.4 10 234.8 6.2 239.4 6.2ZM239.4 8.4C237.2 8.4 235.6 11.2 235.6 15C235.6 18.8 237.2 21.6 239.4 21.6C241.6 21.6 243.2 18.8 243.2 15C243.2 11.2 241.6 8.4 239.4 8.4Z" fill="#ff1b2d"/>
    <!-- medibang -->
    <rect x="266.2" y="6.2" width="17.8" height="17.6" rx="3.4" fill="#f4f4f4"/>
    <circle cx="275.2" cy="15.2" r="5.8" fill="#25b8a6"/><path d="M270.4 18.4A5.8 5.8 0 0 0 280.4 17.8Q275.2 20 270.4 18.4Z" fill="#3cb54a"/><path d="M269.6 13.6A5.8 5.8 0 0 1 276 9.5Q274 12.6 275 15.4Q271.6 15.4 269.6 13.6Z" fill="#f0603a"/><circle cx="276.6" cy="13.8" r="2" fill="#4fd0e0"/>
  </svg>
  <svg class="a" style="left:820px;top:0" width="204" height="30" viewBox="0 0 204 30">
    <g fill="none" stroke="#fff" stroke-width="1"><circle cx="19.4" cy="11.4" r="2.1"/><path d="M15.6 19.6C15.8 16 23 16 23.2 19.6"/><circle cx="14.6" cy="14.6" r="1.7"/><path d="M11.8 20.4C12 17.6 16 17.2 17 19"/></g>
    <path d="M40 17.6L44.4 13L48.8 17.6" fill="none" stroke="#fff" stroke-width="1.1"/>
    <g><rect x="58.4" y="13.4" width="9" height="5.2" fill="none" stroke="#fff" stroke-width="1"/><rect x="60" y="15" width="5.8" height="2.2" fill="#fff"/><path d="M57 11V16M55.4 12.4L57 11L58.6 12.4M58.4 19.6H67.4" fill="none" stroke="#fff" stroke-width=".9"/></g>
    <g fill="none" stroke="#fff" stroke-width="1"><path d="M74.4 13.4H76.4L79 10.8V19.6L76.4 17H74.4Z"/><path d="M80.8 13.2C81.8 14.4 81.8 16 80.8 17.2M82.6 11.6C84.4 13.6 84.4 16.8 82.6 18.8" stroke-width=".9"/><path d="M84.4 10.2C86.8 13 86.8 17.4 84.4 20.2" stroke-width=".7" opacity=".6"/></g>
    <path d="M173.2 9.4H184V17.6H177.6L175.4 20V17.6H173.2Z" fill="#fff"/><path d="M175 11.6H182.2M175 13.6H182.2M175 15.4H180" stroke="#0a3e4b" stroke-width=".7"/>
    <circle cx="185.2" cy="20.2" r="5" fill="#3f9f90" stroke="#0a3e4b" stroke-width=".8"/>
    <text x="185.2" y="23" font-family="Liberation Sans" font-size="7.5" fill="#fff" text-anchor="middle">1</text>
    <path d="M200.4 0V30" stroke="#8fb0b4" stroke-width=".8"/>
  </svg>
  <div class="t" style="left:914px;top:11.5px;font-size:9px;color:#fff;letter-spacing:-0.905px">ENG</div>
  <div class="t" style="left:944.5px;top:3.8px;font-size:9px;color:#fff;letter-spacing:-0.319px">6:50 PM</div>
  <div class="t" style="left:943.5px;top:18px;font-size:9px;color:#fff;letter-spacing:-0.256px">4/9/2021</div>
</div>

</body>
</html>
